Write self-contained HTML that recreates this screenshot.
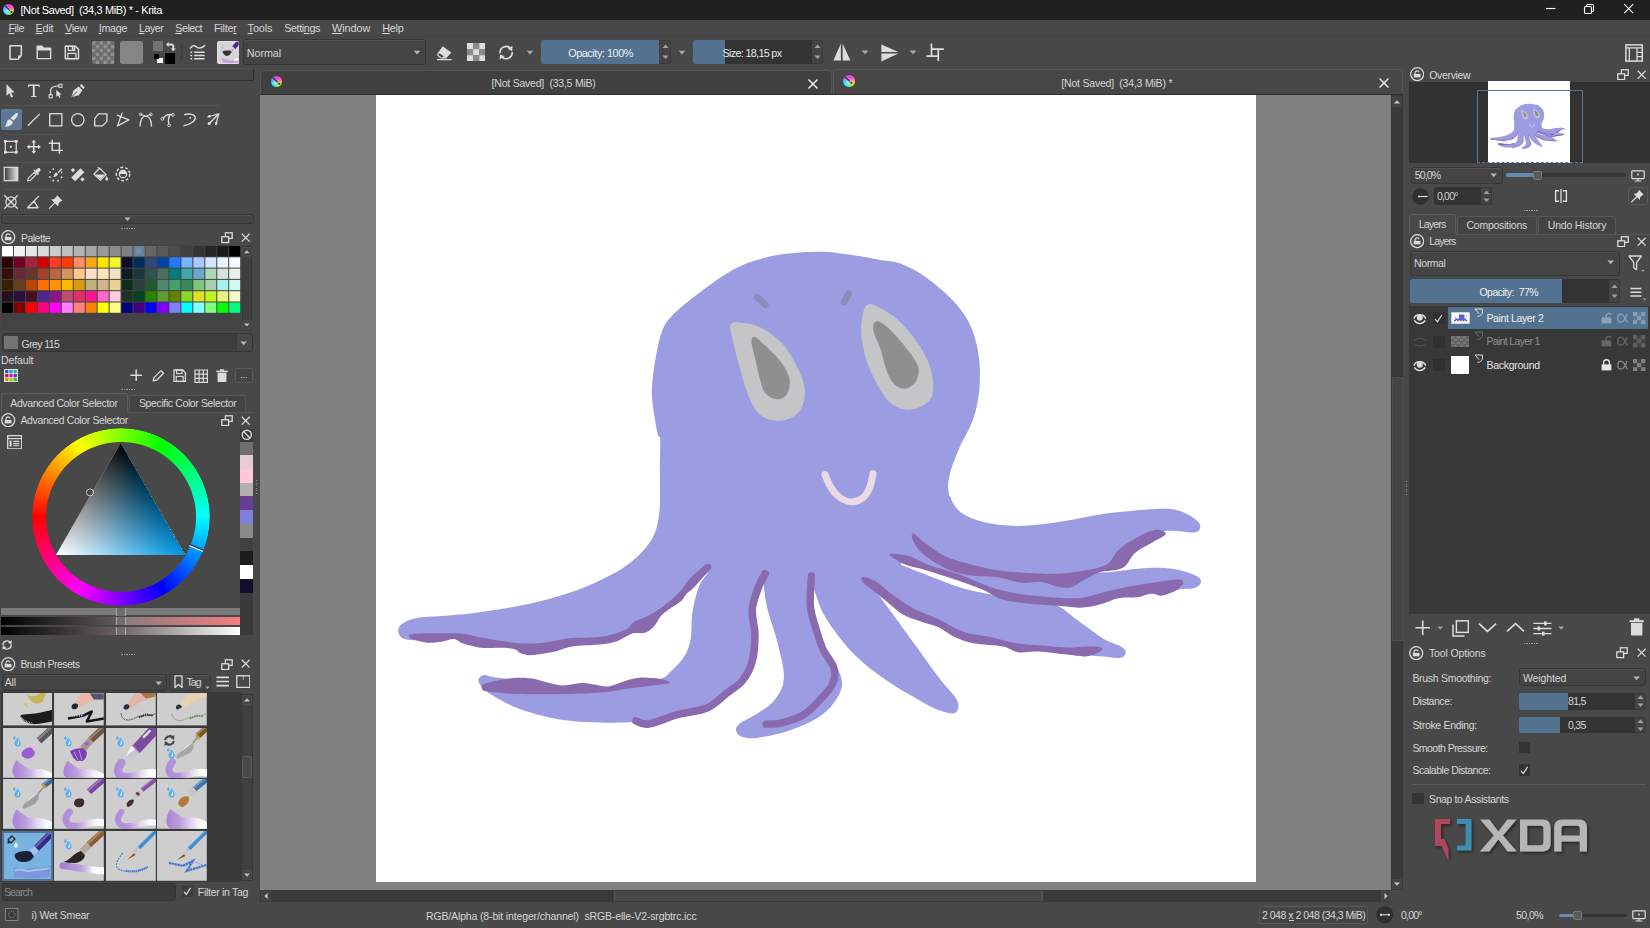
<!DOCTYPE html>
<html><head><meta charset="utf-8"><title>Krita</title>
<style>
html,body{margin:0;padding:0;}
body{width:1650px;height:928px;overflow:hidden;background:#484848;position:relative;
font-family:"Liberation Sans",sans-serif;}
#r{position:absolute;left:0;top:0;width:1650px;height:928px;overflow:hidden;}
#r div,#r span,#r svg{position:absolute;box-sizing:border-box;}
#r span{display:block;}
u{text-decoration:underline;text-underline-offset:1px;text-decoration-thickness:1px;}
</style></head><body><div id="r">

<div style="left:0.00px;top:0.00px;width:1650.00px;height:19.70px;background:#20211f;"></div>
<div style="left:2.60px;top:3.70px;width:11.80px;height:11.80px;border-radius:50%;background:radial-gradient(circle at 42% 58%,rgba(200,235,255,0.9) 0%,rgba(160,225,255,0.55) 22%,rgba(255,255,255,0) 48%),conic-gradient(from 0deg,#ff30f0 0deg,#ff48d8 40deg,#ff7a90 75deg,#ffe830 115deg,#9cf040 160deg,#20f0e0 200deg,#20e0ff 240deg,#6a90ff 285deg,#c060ff 320deg,#ff30f0 360deg);"></div>
<svg style="left:2.60px;top:3.70px;" width="11.80" height="11.80" viewBox="0 0 20 20"><path d="M3.6 3.4L11.4 10.6" stroke="#3a3a3a" stroke-width="2.5" stroke-linecap="round"/><path d="M11 10.2L13.4 12.4" stroke="#d8d8e8" stroke-width="1.6"/><circle cx="14.4" cy="13.4" r="1.9" fill="#2a2c3a"/></svg>
<span style="left:20.40px;top:4.59px;font-size:11px;line-height:11px;color:#ffffff;letter-spacing:-0.377px;white-space:pre;">[Not Saved]  (34,3 MiB) * - Krita</span>
<svg style="left:1545.00px;top:3.40px;" width="12.00" height="12.00" viewBox="0 0 12 12"><path d="M1 5.5H10.5" stroke="#fff" stroke-width="1.1"/></svg>
<svg style="left:1582.50px;top:3.00px;" width="12.00" height="12.00" viewBox="0 0 12 12"><rect x="1.5" y="3.5" width="7" height="7" rx="1.3" fill="none" stroke="#fff" stroke-width="1.1"/><path d="M3.5 3.3V2.6C3.5 2 4 1.5 4.6 1.5H9.4C10 1.5 10.5 2 10.5 2.6V7.4C10.5 8 10 8.5 9.4 8.5H8.8" fill="none" stroke="#fff" stroke-width="1.1"/></svg>
<svg style="left:1623.00px;top:3.00px;" width="12.00" height="12.00" viewBox="0 0 12 12"><path d="M1.2 1.2L10.2 10.2M10.2 1.2L1.2 10.2" stroke="#fff" stroke-width="1.1"/></svg>
<span style="left:8.40px;top:22.76px;font-size:10.8px;line-height:10.8px;color:#d6d6d6;letter-spacing:-0.401px;white-space:pre;"><u>F</u>ile</span>
<span style="left:35.60px;top:22.76px;font-size:10.8px;line-height:10.8px;color:#d6d6d6;letter-spacing:-0.203px;white-space:pre;"><u>E</u>dit</span>
<span style="left:64.90px;top:22.76px;font-size:10.8px;line-height:10.8px;color:#d6d6d6;letter-spacing:-0.279px;white-space:pre;"><u>V</u>iew</span>
<span style="left:98.70px;top:22.76px;font-size:10.8px;line-height:10.8px;color:#d6d6d6;letter-spacing:-0.303px;white-space:pre;"><u>I</u>mage</span>
<span style="left:138.90px;top:22.76px;font-size:10.8px;line-height:10.8px;color:#d6d6d6;letter-spacing:-0.503px;white-space:pre;"><u>L</u>ayer</span>
<span style="left:175.30px;top:22.76px;font-size:10.8px;line-height:10.8px;color:#d6d6d6;letter-spacing:-0.553px;white-space:pre;"><u>S</u>elect</span>
<span style="left:214.00px;top:22.76px;font-size:10.8px;line-height:10.8px;color:#d6d6d6;letter-spacing:-0.233px;white-space:pre;">Filte<u>r</u></span>
<span style="left:247.60px;top:22.76px;font-size:10.8px;line-height:10.8px;color:#d6d6d6;letter-spacing:-0.103px;white-space:pre;"><u>T</u>ools</span>
<span style="left:284.20px;top:22.76px;font-size:10.8px;line-height:10.8px;color:#d6d6d6;letter-spacing:-0.403px;white-space:pre;">Setti<u>n</u>gs</span>
<span style="left:332.00px;top:22.76px;font-size:10.8px;line-height:10.8px;color:#d6d6d6;letter-spacing:-0.035px;white-space:pre;"><u>W</u>indow</span>
<span style="left:382.20px;top:22.76px;font-size:10.8px;line-height:10.8px;color:#d6d6d6;letter-spacing:-0.203px;white-space:pre;"><u>H</u>elp</span>
<div style="left:0.00px;top:36.00px;width:1650.00px;height:1.00px;background:#434343;"></div>
<div style="left:259.60px;top:95.00px;width:1131.60px;height:795.30px;background:#818181;"></div>
<div style="left:376.40px;top:95.40px;width:879.80px;height:787.00px;background:#ffffff;"></div>
<svg style="left:259.60px;top:95.00px;" width="1131.60" height="795.30" viewBox="259.6 95 1131.6 795.3"><g fill="#9c9ce3"><path d="M659.5 470.0C659.2 458.4 660.6 446.6 660.2 440.5C659.8 434.4 658.5 439.7 657.2 433.7C655.9 427.7 653.2 412.7 652.3 404.6C651.4 396.5 651.2 393.3 651.7 385.2C652.2 377.1 653.9 365.3 655.6 356.1C657.3 346.9 659.3 336.9 662.0 330.2C664.7 323.5 666.3 321.3 671.7 315.7C677.1 310.1 685.8 303.0 694.4 296.3C703.0 289.6 714.4 281.0 723.5 275.3C732.6 269.6 739.6 265.8 749.3 262.3C759.0 258.8 769.8 256.1 781.7 254.3C793.6 252.5 809.7 251.7 820.5 251.7C831.3 251.7 836.7 253.0 846.4 254.3C856.1 255.6 869.6 258.1 878.7 259.7C887.9 261.3 893.2 260.9 901.3 264.0C909.4 267.1 918.6 272.3 927.2 278.5C935.8 284.7 946.0 293.6 953.0 301.1C960.0 308.7 965.2 315.7 969.2 323.8C973.2 331.9 975.6 341.0 977.3 349.6C979.0 358.2 979.6 366.9 979.6 375.5C979.6 384.1 978.8 393.3 977.3 401.4C975.8 409.5 973.9 416.4 970.9 424.0C967.9 431.6 963.0 438.6 959.5 446.7C956.0 454.8 951.8 465.0 949.8 472.5C947.8 480.0 947.2 486.8 947.2 491.9C947.2 497.0 952.9 495.0 950.0 503.0C947.1 511.0 941.7 530.5 930.0 540.0C918.3 549.5 901.7 555.8 880.0 560.0C858.3 564.2 826.7 565.0 800.0 565.0C773.3 565.0 740.0 564.2 720.0 560.0C700.0 555.8 689.7 548.3 680.0 540.0C670.3 531.7 665.4 521.7 662.0 510.0C658.6 498.3 659.8 481.6 659.5 470.0Z"/><path d="M660.0 438.0L660.0 530.0L705.0 562.0L711.0 570.5L764.0 573.0L767.0 573.8L811.0 575.2L815.0 576.6L870.0 592.0L905.0 560.0L950.0 510.0L947.0 480.0L800.0 400.0Z"/><path d="M700.0 520.0C688.0 505.0 674.6 474.0 668.0 470.0C661.4 466.0 661.9 488.9 660.4 496.0C658.9 503.1 659.9 506.3 659.0 512.3C658.1 518.2 657.2 525.8 654.9 531.7C652.6 537.6 650.1 542.2 645.2 547.9C640.4 553.6 633.3 560.3 625.8 565.7C618.2 571.1 609.6 575.6 599.9 580.2C590.2 584.8 580.0 589.2 567.6 593.2C555.2 597.2 540.6 601.3 525.5 604.5C510.4 607.7 490.5 610.7 477.0 612.6C463.5 614.5 454.4 615.0 444.7 615.8C435.0 616.6 425.5 616.5 418.8 617.6C412.1 618.7 407.8 620.4 404.3 622.3C400.8 624.2 398.6 626.4 398.0 628.9C397.4 631.4 398.4 635.1 400.5 637.0C402.6 638.9 405.5 639.5 410.7 640.1C415.9 640.7 423.9 640.8 431.7 640.5C439.5 640.2 448.4 637.7 457.6 638.5C466.8 639.3 477.0 643.9 486.7 645.5C496.4 647.1 508.2 646.9 515.8 648.0C523.3 649.1 523.4 652.8 532.0 652.0C540.6 651.2 555.2 645.0 567.6 643.0C580.0 641.0 595.5 642.2 606.3 640.0C617.1 637.8 624.1 634.0 632.2 630.0C640.3 626.0 648.6 620.2 654.9 616.0C661.2 611.8 665.1 608.7 670.0 604.5C674.9 600.3 679.5 595.4 684.0 591.0C688.5 586.6 693.0 581.9 697.0 578.0C701.0 574.1 701.0 570.5 708.2 567.5C715.4 564.5 741.4 567.9 740.0 560.0C738.6 552.1 712.0 535.0 700.0 520.0Z"/><path d="M700.0 570.0C691.4 571.8 708.5 568.2 708.2 571.0C708.0 573.8 701.2 579.8 698.5 586.7C695.8 593.6 693.4 604.0 692.0 612.6C690.6 621.2 691.7 631.1 690.4 638.4C689.1 645.7 687.2 650.8 684.0 656.2C680.8 661.6 674.8 667.1 671.0 670.8C667.2 674.5 666.7 676.8 661.3 678.5C655.9 680.2 646.8 679.6 638.7 681.0C630.6 682.4 621.4 686.3 612.8 687.0C604.2 687.7 595.1 685.3 587.0 685.3C578.9 685.3 573.5 687.7 564.3 687.0C555.1 686.3 541.2 682.3 532.0 681.0C522.8 679.7 516.0 679.7 509.3 679.0C502.6 678.3 496.1 677.7 492.0 677.0C487.9 676.3 486.6 674.9 484.5 675.0C482.4 675.1 480.2 676.2 479.2 677.5C478.2 678.8 477.4 680.6 478.6 683.0C479.9 685.4 483.3 689.0 486.7 691.8C490.1 694.5 493.9 696.8 499.0 699.5C504.1 702.2 509.7 705.4 517.3 708.2C524.9 711.0 535.4 714.3 544.5 716.4C553.6 718.5 561.2 719.8 571.8 720.9C582.4 722.0 597.6 722.5 608.2 722.7C618.8 723.0 628.8 722.2 635.5 722.4C642.2 722.6 641.4 725.4 648.4 724.1C655.4 722.8 667.8 717.1 677.5 714.4C687.2 711.7 698.5 711.5 706.6 708.0C714.7 704.5 720.1 698.0 726.0 693.4C731.9 688.8 737.9 685.9 742.2 680.5C746.5 675.1 749.9 668.6 751.9 661.1C753.9 653.6 754.5 643.8 754.5 635.2C754.5 626.6 751.3 617.5 751.9 609.4C752.5 601.3 756.2 592.6 758.3 586.7C760.4 580.8 764.3 578.2 764.6 573.8C764.9 569.3 770.8 560.6 760.0 560.0C749.2 559.4 708.6 568.2 700.0 570.0Z"/><path d="M790.0 555.0C782.2 554.7 769.9 566.3 765.9 574.4C761.9 582.5 764.0 592.2 765.9 603.5C767.8 614.8 774.1 629.9 777.0 642.3C779.9 654.7 784.0 668.2 783.5 677.9C783.0 687.6 778.6 694.3 773.8 700.5C768.9 706.7 760.1 711.2 754.4 715.0C748.7 718.8 742.9 720.6 739.8 723.1C736.7 725.6 735.3 727.9 735.6 730.2C735.9 732.5 737.7 735.5 741.4 736.7C745.1 738.0 749.5 738.8 757.6 737.7C765.7 736.6 779.7 733.7 789.9 730.2C800.1 726.7 811.5 721.7 819.0 716.7C826.5 711.8 831.4 705.9 835.2 700.5C839.0 695.1 841.4 689.7 841.7 684.3C842.0 678.9 839.8 674.0 836.8 668.1C833.8 662.2 827.3 655.2 824.0 648.7C820.7 642.2 818.9 636.0 817.0 629.0C815.1 622.0 813.2 615.5 812.5 606.7C811.8 597.9 816.2 584.6 812.5 576.0C808.8 567.4 797.8 555.3 790.0 555.0Z"/><path d="M840.0 555.0C830.4 553.3 818.2 570.1 814.4 577.6C810.6 585.1 815.0 592.7 817.4 600.2C819.8 607.8 822.5 613.7 828.7 622.9C834.9 632.1 844.9 645.5 854.6 655.2C864.3 664.9 876.2 673.6 887.0 681.1C897.8 688.6 910.7 695.6 919.3 700.5C927.9 705.4 933.1 708.1 938.7 710.2C944.4 712.4 950.0 714.0 953.2 713.4C956.4 712.8 957.8 709.6 958.1 706.9C958.4 704.2 958.1 702.0 954.9 697.2C951.7 692.4 945.7 687.0 938.7 677.9C931.7 668.8 921.4 654.2 912.8 642.3C904.2 630.4 893.8 615.8 887.0 606.7C880.2 597.7 879.8 596.6 872.0 588.0C864.2 579.4 849.6 556.7 840.0 555.0Z"/><path d="M870.0 552.0C877.5 552.4 885.0 558.4 895.0 562.5C905.0 566.6 919.2 572.3 930.0 576.5C940.8 580.7 951.2 584.8 960.0 587.5C968.8 590.2 973.0 590.9 983.0 593.0C993.0 595.1 1008.2 598.1 1020.0 600.0C1031.8 601.9 1044.0 600.8 1054.0 604.5C1064.0 608.2 1071.8 616.6 1079.9 622.3C1088.0 627.9 1096.0 634.5 1102.5 638.4C1109.0 642.3 1114.9 643.4 1118.7 645.6C1122.5 647.8 1124.9 649.4 1125.2 651.4C1125.5 653.4 1124.6 657.0 1120.3 657.8C1116.0 658.6 1110.3 657.0 1099.3 656.2C1088.2 655.4 1068.0 654.4 1054.0 653.0C1040.0 651.6 1023.8 649.4 1015.2 648.1C1006.6 646.8 1009.8 646.4 1002.3 645.0C994.8 643.6 979.7 642.7 970.0 640.0C960.3 637.3 954.2 633.0 944.0 629.0C933.8 625.0 918.2 621.2 908.5 616.0C898.8 610.8 893.4 604.0 885.9 598.0C878.4 592.0 869.2 586.3 863.2 580.0C857.2 573.7 848.9 564.7 850.0 560.0C851.1 555.3 862.5 551.6 870.0 552.0Z"/><path d="M900.0 535.0C911.7 536.7 933.3 549.5 950.0 555.0C966.7 560.5 983.3 564.8 1000.0 568.0C1016.7 571.2 1032.4 573.3 1050.0 574.0C1067.6 574.7 1091.6 573.1 1105.8 572.2C1120.0 571.4 1125.2 569.6 1134.9 568.9C1144.6 568.2 1155.9 567.6 1164.0 568.0C1172.1 568.4 1177.8 569.7 1183.4 571.2C1189.1 572.7 1195.1 575.0 1197.9 577.0C1200.7 579.0 1201.0 581.6 1200.2 583.5C1199.4 585.4 1196.5 587.3 1193.1 588.3C1189.7 589.3 1184.8 588.5 1180.0 589.3C1175.2 590.1 1171.0 592.0 1164.0 593.0C1157.0 594.0 1146.6 594.0 1138.0 595.0C1129.4 596.0 1120.8 597.2 1112.2 599.0C1103.6 600.8 1096.1 605.2 1086.4 606.0C1076.7 606.8 1064.8 604.8 1054.0 604.0C1043.2 603.2 1031.4 602.8 1021.7 601.0C1012.0 599.2 1005.0 596.2 995.8 593.0C986.6 589.8 978.0 586.0 966.7 582.0C955.4 578.0 937.6 572.3 927.9 569.0C918.2 565.7 914.4 564.3 908.5 562.0C902.6 559.7 897.0 557.8 892.3 555.0C887.5 552.2 878.7 548.3 880.0 545.0C881.3 541.7 888.3 533.3 900.0 535.0Z"/><path d="M930.0 480.0C937.9 477.0 944.1 489.2 947.2 491.9C950.4 494.6 946.7 492.8 948.9 496.2C951.1 499.6 954.5 508.0 960.2 512.3C965.9 516.6 973.7 519.7 982.9 522.0C992.1 524.3 1003.4 525.8 1015.2 525.9C1027.0 526.0 1039.5 524.7 1054.0 522.7C1068.5 520.7 1087.4 516.2 1102.5 514.0C1117.6 511.8 1133.3 510.5 1144.6 509.7C1155.9 508.9 1163.4 508.4 1170.4 509.1C1177.4 509.8 1182.0 511.9 1186.6 514.0C1191.2 516.1 1195.8 519.6 1197.9 522.0C1200.1 524.4 1200.3 526.8 1199.5 528.5C1198.7 530.2 1199.0 532.0 1193.1 532.4C1187.2 532.8 1172.1 529.6 1164.0 531.1C1155.9 532.6 1151.1 537.0 1144.6 541.4C1138.1 545.8 1130.6 553.3 1125.2 557.6C1119.8 561.9 1118.7 564.4 1112.2 567.3C1105.7 570.2 1093.9 572.2 1086.4 575.0C1078.9 577.8 1074.6 583.2 1067.0 584.0C1059.4 584.8 1049.6 581.0 1041.0 580.0C1032.4 579.0 1024.9 579.2 1015.2 578.0C1005.5 576.8 992.6 574.7 982.9 573.0C973.2 571.3 965.1 570.7 957.0 568.0C948.9 565.3 940.9 561.0 934.4 557.0C927.9 553.0 921.7 547.7 918.2 544.0C914.7 540.3 916.4 540.7 913.4 535.0C910.4 529.3 897.2 519.2 900.0 510.0C902.8 500.8 922.1 483.0 930.0 480.0Z"/></g><g fill="#8a6aae"><path d="M410.0 634.5C412.9 633.9 420.6 633.5 426.4 633.3C432.1 633.1 438.8 633.2 444.5 633.3C450.2 633.3 454.8 632.9 460.9 633.6C467.0 634.3 473.3 636.2 480.9 637.6C488.5 639.0 497.9 640.8 506.4 641.8C514.9 642.8 523.9 643.8 531.8 643.6C539.7 643.5 547.5 641.8 553.6 640.9C559.7 640.0 562.1 638.8 568.2 638.2C574.3 637.7 583.3 638.1 590.0 637.6C596.7 637.1 602.1 636.9 608.2 635.5C614.3 634.1 622.2 631.4 626.4 629.1C630.6 626.8 630.0 624.1 633.6 621.8C637.2 619.5 643.4 618.1 648.2 615.5C653.1 612.9 658.5 609.4 662.7 606.4C666.9 603.4 670.6 600.0 673.6 597.3C676.6 594.6 678.2 593.2 680.9 590.0C683.6 586.8 686.8 581.5 690.0 578.0C693.2 574.5 697.2 571.4 700.0 569.0C702.8 566.6 705.2 564.0 707.0 563.8C708.8 563.5 711.8 565.1 711.0 567.5C710.2 569.9 705.2 574.4 702.0 578.0C698.8 581.6 694.6 586.4 692.0 589.0C689.4 591.6 688.2 591.6 686.4 593.6C684.5 595.6 683.6 598.5 680.9 600.9C678.2 603.3 673.3 605.8 670.0 608.2C666.7 610.6 663.6 612.5 660.9 615.5C658.2 618.5 656.3 623.5 653.6 626.4C650.9 629.3 648.1 631.5 644.5 632.7C640.9 633.9 636.3 632.2 631.8 633.6C627.3 635.0 622.8 639.1 617.3 640.9C611.8 642.7 606.7 643.6 599.1 644.5C591.5 645.4 579.4 645.2 571.8 646.4C564.2 647.6 560.3 650.3 553.6 651.8C546.9 653.2 537.2 654.8 531.8 655.1C526.3 655.4 523.9 654.6 520.9 653.6C517.9 652.6 517.2 650.1 513.6 649.1C510.0 648.1 504.6 648.0 499.1 647.8C493.7 647.6 487.0 648.5 480.9 647.8C474.8 647.1 467.2 645.0 462.7 643.6C458.1 642.2 457.2 639.4 453.6 639.1C450.0 638.8 445.4 641.2 440.9 641.8C436.4 642.4 431.2 643.2 426.4 642.7C421.5 642.2 414.7 640.1 411.8 639.1C408.9 638.1 409.4 637.7 409.1 636.9C408.8 636.1 407.1 635.1 410.0 634.5Z"/><path d="M482.7 684.5C485.6 683.1 493.3 681.1 499.1 680.0C504.9 678.9 511.8 678.0 517.3 677.8C522.8 677.5 526.6 677.7 531.8 678.5C536.9 679.3 543.1 681.5 548.2 682.7C553.4 683.9 557.2 685.4 562.7 685.5C568.2 685.6 575.8 683.3 580.9 683.1C586.0 682.9 589.0 684.0 593.6 684.5C598.2 685.0 603.1 687.0 608.2 686.4C613.4 685.8 619.0 682.4 624.5 680.9C630.0 679.4 635.1 678.0 640.9 677.6C646.7 677.2 654.7 678.2 659.1 678.7C663.5 679.2 665.9 680.1 667.3 680.9C668.7 681.7 671.1 682.7 667.3 683.6C663.5 684.5 651.6 685.5 644.5 686.4C637.4 687.3 630.5 688.2 624.5 689.1C618.5 690.0 615.5 691.0 608.2 691.8C600.9 692.5 590.0 693.2 580.9 693.6C571.8 694.0 564.2 694.1 553.6 694.2C543.0 694.3 526.4 694.2 517.3 694.0C508.2 693.8 504.6 693.2 499.1 692.7C493.6 692.2 487.4 691.6 484.5 690.9C481.6 690.1 481.8 689.3 481.5 688.2C481.2 687.1 479.8 685.9 482.7 684.5Z"/><path d="M863.2 577.0C865.7 577.2 871.3 578.9 876.2 581.9C881.0 584.8 886.4 590.5 892.3 594.8C898.3 599.1 904.2 603.7 911.7 607.7C919.3 611.8 929.0 615.0 937.6 619.0C946.2 623.1 954.9 629.0 963.5 632.0C972.1 634.9 980.7 634.9 989.3 636.8C998.0 638.7 1006.6 641.8 1015.2 643.3C1023.8 644.8 1032.5 644.9 1041.1 645.6C1049.7 646.3 1059.4 647.3 1067.0 647.5C1074.5 647.7 1081.0 646.6 1086.4 646.5C1091.7 646.4 1096.9 646.2 1099.3 646.9C1101.7 647.6 1103.1 649.2 1100.9 650.7C1098.7 652.3 1092.0 655.6 1086.4 656.2C1080.7 656.9 1074.5 655.4 1067.0 654.6C1059.4 653.8 1049.2 651.8 1041.1 651.4C1033.0 651.0 1024.9 653.2 1018.4 652.4C1012.0 651.5 1009.8 648.0 1002.3 646.5C994.7 645.0 981.3 644.9 973.2 643.3C965.1 641.7 959.7 639.5 953.8 636.8C947.8 634.1 943.5 629.8 937.6 627.1C931.7 624.4 924.1 622.8 918.2 620.7C912.3 618.5 907.4 617.4 902.0 614.2C896.6 611.0 891.3 605.6 885.9 601.3C880.5 596.9 873.7 591.7 869.7 588.3C865.7 584.9 862.7 582.8 861.6 580.9C860.5 579.0 860.8 576.8 863.2 577.0Z"/><path d="M890.7 553.7C893.4 553.5 902.3 554.2 908.5 556.0C914.7 557.8 919.8 561.8 927.9 564.7C936.0 567.7 946.8 570.1 957.0 573.8C967.2 577.4 979.6 583.5 989.3 586.7C999.0 589.9 1005.5 591.5 1015.2 593.2C1024.9 594.9 1036.8 596.2 1047.6 597.1C1058.3 597.9 1070.2 598.9 1079.9 598.0C1089.6 597.1 1097.1 593.6 1105.8 591.6C1114.4 589.6 1123.0 587.7 1131.6 586.1C1140.2 584.4 1149.7 582.9 1157.5 581.9C1165.3 580.8 1174.3 579.6 1178.5 579.6C1182.7 579.6 1182.2 580.9 1182.7 581.9C1183.3 582.8 1183.3 583.5 1181.7 585.1C1180.2 586.7 1177.2 589.8 1173.7 591.6C1170.2 593.3 1164.5 595.5 1160.7 595.8C1157.0 596.0 1154.8 593.0 1151.0 593.2C1147.3 593.4 1143.5 596.2 1138.1 597.1C1132.7 597.9 1125.2 596.8 1118.7 598.0C1112.2 599.3 1105.8 602.9 1099.3 604.5C1092.8 606.1 1086.4 607.5 1079.9 607.7C1073.4 608.0 1069.1 606.8 1060.5 606.1C1051.9 605.4 1037.8 604.6 1028.1 603.5C1018.4 602.4 1009.8 601.9 1002.3 599.6C994.7 597.4 990.4 593.2 982.9 589.9C975.3 586.7 966.7 583.6 957.0 580.2C947.3 576.9 933.3 572.5 924.7 569.9C916.0 567.3 910.7 566.8 905.3 564.7C899.9 562.7 894.8 559.4 892.3 557.6C889.9 555.8 888.0 554.0 890.7 553.7Z"/><path d="M913.4 533.4C915.5 534.2 919.6 539.3 924.7 543.1C929.8 546.8 937.1 552.6 944.1 556.0C951.1 559.4 958.1 561.1 966.7 563.4C975.3 565.7 985.6 568.3 995.8 569.9C1006.1 571.5 1018.4 572.5 1028.1 573.1C1037.8 573.8 1045.4 574.1 1054.0 573.8C1062.6 573.5 1071.3 572.7 1079.9 571.2C1088.5 569.7 1099.3 568.3 1105.8 564.7C1112.2 561.1 1113.3 554.2 1118.7 549.5C1124.1 544.8 1132.2 539.8 1138.1 536.6C1144.0 533.4 1149.9 530.9 1154.3 530.1C1158.6 529.3 1162.3 530.8 1164.0 531.7C1165.6 532.7 1166.1 533.7 1164.0 535.6C1161.8 537.5 1155.9 540.2 1151.0 543.1C1146.2 545.9 1139.2 549.0 1134.9 552.8C1130.5 556.5 1128.4 562.8 1125.2 565.7C1121.9 568.5 1119.8 568.8 1115.5 569.9C1111.1 571.0 1104.7 570.4 1099.3 572.2C1093.9 573.9 1088.0 577.7 1083.1 580.2C1078.3 582.8 1074.5 586.3 1070.2 587.4C1065.9 588.4 1062.1 587.6 1057.3 586.7C1052.4 585.8 1047.0 582.5 1041.1 581.9C1035.2 581.2 1029.2 583.6 1021.7 582.8C1014.1 582.0 1004.4 578.2 995.8 577.0C987.2 575.8 977.5 576.5 969.9 575.4C962.4 574.3 957.0 573.1 950.5 570.5C944.1 568.0 936.5 563.7 931.1 560.2C925.8 556.7 921.4 553.2 918.2 549.5C915.0 545.9 912.5 540.9 911.7 538.2C910.9 535.5 911.2 532.5 913.4 533.4Z"/></g><g fill="none" stroke="#8a6aae" stroke-linecap="round" stroke-linejoin="round"><path d="M635.5 720.9C637.6 721.4 641.4 725.2 648.4 724.1C655.4 723.0 667.8 717.1 677.5 714.4C687.2 711.7 698.5 711.5 706.6 708.0C714.7 704.5 720.1 698.0 726.0 693.4C731.9 688.8 737.9 685.9 742.2 680.5C746.5 675.1 749.9 668.6 751.9 661.1C753.9 653.6 754.5 643.8 754.5 635.2C754.5 626.6 751.3 617.5 751.9 609.4C752.5 601.3 756.1 592.6 758.3 586.7C760.4 580.8 763.7 575.9 764.8 573.8" stroke-width="7.6"/><path d="M811.0 576.0C810.8 581.1 809.2 597.8 810.0 606.7C810.8 615.6 813.8 622.3 815.8 629.3C817.8 636.3 819.3 642.2 822.3 648.7C825.3 655.2 832.0 662.2 833.6 668.1C835.2 674.0 834.4 678.9 832.0 684.3C829.6 689.7 823.9 695.4 819.0 700.5C814.1 705.6 809.4 711.2 802.9 715.0C796.4 718.8 786.4 721.6 780.2 723.1C774.0 724.6 768.1 723.9 765.7 724.1" stroke-width="7.4"/></g><path d="M730.0 325.4C730.8 323.0 731.6 321.9 736.4 322.2C741.2 322.5 751.5 323.5 759.0 327.0C766.5 330.5 775.5 336.7 781.7 343.2C787.9 349.7 792.4 358.3 796.2 365.8C800.0 373.3 803.4 381.7 804.3 388.4C805.2 395.1 803.9 401.3 801.7 406.2C799.6 411.1 795.8 415.2 791.4 417.6C787.0 420.0 780.6 421.4 775.2 420.8C769.8 420.2 763.6 418.6 759.0 414.3C754.4 410.0 751.2 403.5 747.7 394.9C744.2 386.3 740.7 372.3 738.0 362.6C735.3 352.9 732.9 342.9 731.6 336.7C730.3 330.5 729.2 327.8 730.0 325.4Z" fill="#c5c5c7"/><path d="M754.2 336.7C756.1 337.0 758.3 339.4 762.3 343.2C766.3 347.0 774.1 353.9 778.4 359.3C782.7 364.7 786.4 370.6 788.1 375.5C789.8 380.4 789.6 384.7 788.8 388.4C788.0 392.1 785.8 395.8 783.3 397.5C780.8 399.2 776.8 399.8 773.6 398.8C770.4 397.8 766.3 395.3 763.9 391.7C761.5 388.1 760.6 383.0 759.0 377.1C757.4 371.2 755.5 362.0 754.2 356.1C752.9 350.2 751.0 344.8 751.0 341.6C751.0 338.4 752.3 336.4 754.2 336.7Z" fill="#8f8f8f"/><path d="M867.4 304.4C870.1 303.3 873.6 304.9 878.7 307.6C883.8 310.3 891.6 314.6 898.1 320.5C904.6 326.4 912.1 335.1 917.5 343.2C922.9 351.3 928.0 360.4 930.4 369.0C932.8 377.6 933.6 388.7 932.0 394.9C930.4 401.1 925.3 403.8 920.7 406.2C916.1 408.6 910.0 410.3 904.6 409.5C899.2 408.7 893.2 406.0 888.4 401.4C883.5 396.8 879.3 389.0 875.5 382.0C871.7 375.0 868.2 367.4 865.8 359.3C863.4 351.2 861.4 341.0 860.9 333.5C860.4 326.0 861.4 319.0 862.5 314.1C863.6 309.2 864.7 305.5 867.4 304.4Z" fill="#c5c5c7"/><path d="M877.1 321.2C879.4 321.5 882.2 322.8 886.8 327.0C891.4 331.2 899.5 339.9 904.6 346.4C909.7 352.9 915.6 360.1 917.5 365.8C919.4 371.5 917.8 376.6 915.9 380.4C914.0 384.2 909.7 387.6 906.2 388.4C902.7 389.2 898.1 387.9 894.9 385.2C891.7 382.5 889.2 378.2 886.8 372.3C884.4 366.4 882.5 356.1 880.3 349.6C878.1 343.1 875.0 337.5 873.8 333.5C872.6 329.5 872.3 327.4 872.9 325.4C873.5 323.3 874.8 320.9 877.1 321.2Z" fill="#8f8f8f"/><g fill="none" stroke-linecap="round"><path d="M756.8 297.2L765 304.6" stroke="#8c8cba" stroke-width="6.6"/><path d="M848.3 293.6L843.6 302.3" stroke="#8c8cba" stroke-width="6.6"/><path d="M824.6 474.5C828 484 832 491 837 495.5C843 501 851 503.5 858 500.5C866 497 870 490 872.6 473.6" stroke="#ecd9e6" stroke-width="7"/></g></svg>
<div style="left:259.80px;top:69.80px;width:572.00px;height:24.40px;background:#404040;border:1px solid #535353;border-bottom:none;border-radius:4px 4px 0 0;"></div>
<div style="left:833.30px;top:68.60px;width:569.40px;height:25.80px;background:#474747;border:1px solid #555555;border-bottom:none;border-radius:4px 4px 0 0;"></div>
<div style="left:259.60px;top:94.00px;width:1143.40px;height:1.20px;background:#2e2e2e;"></div>
<div style="left:270.90px;top:75.70px;width:11.60px;height:11.60px;border-radius:50%;background:radial-gradient(circle at 42% 58%,rgba(200,235,255,0.9) 0%,rgba(160,225,255,0.55) 22%,rgba(255,255,255,0) 48%),conic-gradient(from 0deg,#ff30f0 0deg,#ff48d8 40deg,#ff7a90 75deg,#ffe830 115deg,#9cf040 160deg,#20f0e0 200deg,#20e0ff 240deg,#6a90ff 285deg,#c060ff 320deg,#ff30f0 360deg);"></div>
<svg style="left:270.90px;top:75.70px;" width="11.60" height="11.60" viewBox="0 0 20 20"><path d="M3.6 3.4L11.4 10.6" stroke="#3a3a3a" stroke-width="2.5" stroke-linecap="round"/><path d="M11 10.2L13.4 12.4" stroke="#d8d8e8" stroke-width="1.6"/><circle cx="14.4" cy="13.4" r="1.9" fill="#2a2c3a"/></svg>
<div style="left:843.00px;top:75.40px;width:11.60px;height:11.60px;border-radius:50%;background:radial-gradient(circle at 42% 58%,rgba(200,235,255,0.9) 0%,rgba(160,225,255,0.55) 22%,rgba(255,255,255,0) 48%),conic-gradient(from 0deg,#ff30f0 0deg,#ff48d8 40deg,#ff7a90 75deg,#ffe830 115deg,#9cf040 160deg,#20f0e0 200deg,#20e0ff 240deg,#6a90ff 285deg,#c060ff 320deg,#ff30f0 360deg);"></div>
<svg style="left:843.00px;top:75.40px;" width="11.60" height="11.60" viewBox="0 0 20 20"><path d="M3.6 3.4L11.4 10.6" stroke="#3a3a3a" stroke-width="2.5" stroke-linecap="round"/><path d="M11 10.2L13.4 12.4" stroke="#d8d8e8" stroke-width="1.6"/><circle cx="14.4" cy="13.4" r="1.9" fill="#2a2c3a"/></svg>
<span style="left:491.60px;top:78.01px;font-size:10.5px;line-height:10.5px;color:#d6d6d6;letter-spacing:-0.223px;white-space:pre;">[Not Saved]  (33,5 MiB)</span>
<span style="left:1061.30px;top:78.01px;font-size:10.5px;line-height:10.5px;color:#d6d6d6;letter-spacing:-0.205px;white-space:pre;">[Not Saved]  (34,3 MiB) *</span>
<svg style="left:806.50px;top:77.60px;" width="12.00" height="12.00" viewBox="0 0 12 12"><path d="M1.5 1.5L10.5 10.5M10.5 1.5L1.5 10.5" stroke="#f0f0f0" stroke-width="1.5"/></svg>
<svg style="left:1377.80px;top:77.30px;" width="12.00" height="12.00" viewBox="0 0 12 12"><path d="M1.5 1.5L10.5 10.5M10.5 1.5L1.5 10.5" stroke="#f0f0f0" stroke-width="1.5"/></svg>
<div style="left:1391.20px;top:95.00px;width:11.80px;height:795.30px;background:#3a3a3a;"></div>
<div style="left:1391.80px;top:377.00px;width:11.00px;height:264.00px;background:#444444;border:1px solid #4e4e4e;"></div>
<svg style="left:1392.20px;top:96.50px;" width="10.00" height="10.00" viewBox="0 0 10 10"><rect x="0" y="0" width="10" height="10" rx="1" fill="#434343" stroke="#555" stroke-width="0.6"/><path d="M2 6.5L5 3.3L8 6.5Z" fill="#c8c8c8"/></svg>
<svg style="left:1392.20px;top:879.40px;" width="10.00" height="10.00" viewBox="0 0 10 10"><rect x="0" y="0" width="10" height="10" rx="1" fill="#434343" stroke="#555" stroke-width="0.6"/><path d="M2 3.5L5 6.7L8 3.5Z" fill="#c8c8c8"/></svg>
<div style="left:259.60px;top:890.30px;width:1131.60px;height:11.80px;background:#3a3a3a;"></div>
<div style="left:614.00px;top:891.00px;width:428.60px;height:10.40px;background:#484848;border-left:1px solid #555;border-right:1px solid #555;"></div>
<svg style="left:261.00px;top:891.20px;" width="10.00" height="10.00" viewBox="0 0 10 10"><rect x="0" y="0" width="10" height="10" rx="1" fill="#434343" stroke="#555" stroke-width="0.6"/><path d="M6.5 2L3.3 5L6.5 8Z" fill="#c8c8c8"/></svg>
<svg style="left:1380.60px;top:891.20px;" width="10.00" height="10.00" viewBox="0 0 10 10"><rect x="0" y="0" width="10" height="10" rx="1" fill="#434343" stroke="#555" stroke-width="0.6"/><path d="M3.5 2L6.7 5L3.5 8Z" fill="#c8c8c8"/></svg>
<span style="left:31.50px;top:910.31px;font-size:10.5px;line-height:10.5px;color:#d6d6d6;letter-spacing:-0.272px;white-space:pre;">i) Wet Smear</span>
<svg style="left:5.40px;top:908.30px;" width="13.50" height="13.00" viewBox="0 0 13.5 13"><rect x="0.5" y="0.5" width="12.5" height="12" fill="#3c3c3c" stroke="#8a8a8a" stroke-width="0.9"/><circle cx="6.75" cy="6.5" r="3.2" fill="none" stroke="#a0a0a0" stroke-width="0.8" stroke-dasharray="1 1"/></svg>
<span style="left:426.00px;top:910.71px;font-size:10.5px;line-height:10.5px;color:#d6d6d6;letter-spacing:-0.143px;white-space:pre;">RGB/Alpha (8-bit integer/channel)  sRGB-elle-V2-srgbtrc.icc</span>
<div style="left:1258.90px;top:906.20px;width:109.50px;height:17.70px;background:#454545;border:1px solid #5a5a5a;border-radius:2px;"></div>
<span style="left:1262.00px;top:910.31px;font-size:10.5px;line-height:10.5px;color:#d6d6d6;letter-spacing:-0.491px;white-space:pre;">2 048 x 2 048 (34,3 MiB)</span>
<div style="left:1288.50px;top:920.20px;width:5.00px;height:0.90px;background:#d0d0d0;"></div>
<svg style="left:1376.30px;top:906.20px;" width="17.60" height="17.60" viewBox="0 0 17.6 17.6"><circle cx="8.8" cy="8.8" r="8.6" fill="#303030"/><path d="M5 8.8H14" stroke="#e8e8e8" stroke-width="1"/><circle cx="5" cy="8.8" r="1.1" fill="#e8e8e8"/><path d="M12.4 7.2L14.4 8.8L12.4 10.4Z" fill="#e8e8e8"/></svg>
<span style="left:1401.00px;top:910.31px;font-size:10.5px;line-height:10.5px;color:#d6d6d6;letter-spacing:-0.807px;white-space:pre;">0,00°</span>
<span style="left:1516.00px;top:910.31px;font-size:10.5px;line-height:10.5px;color:#d6d6d6;letter-spacing:-0.554px;white-space:pre;">50,0%</span>
<div style="left:1558.50px;top:913.80px;width:68.00px;height:3.20px;background:#363636;border-radius:1.6px;"></div>
<div style="left:1558.50px;top:913.80px;width:16.00px;height:3.20px;background:#658ab6;border-radius:1.6px;"></div>
<div style="left:1573.30px;top:910.60px;width:9.00px;height:9.40px;background:#5a5a5a;border:1px solid #777;border-radius:2px;"></div>
<svg style="left:1632.20px;top:909.60px;" width="14.00" height="12.00" viewBox="0 0 14 12"><rect x="0.8" y="0.8" width="12.4" height="7.8" rx="0.8" fill="none" stroke="#dcdcdc" stroke-width="1.2"/><rect x="6.2" y="3.6" width="1.6" height="1.8" fill="#dcdcdc"/><path d="M7 8.6V10.6M3.6 11H10.4" stroke="#dcdcdc" stroke-width="1.1"/></svg>
<svg style="left:8.00px;top:44.00px;" width="16.00" height="17.00" viewBox="0 0 16 17"><path d="M2 1.7H13.3V11.5L10 15.3H2Z" fill="none" stroke="#dcdcdc" stroke-width="1.5" stroke-linejoin="round"/><path d="M13.3 11.5H10V15.3Z" fill="#dcdcdc"/></svg>
<svg style="left:36.00px;top:45.00px;" width="16.00" height="15.00" viewBox="0 0 16 15"><path d="M1.2 13.6V1.2H6L7.6 3.2H14.6V13.6Z" fill="none" stroke="#dcdcdc" stroke-width="1.4" stroke-linejoin="round"/><path d="M1.2 1.2H6L7.6 3.2H14.6V5.4H1.2Z" fill="#dcdcdc"/></svg>
<svg style="left:64.30px;top:44.80px;" width="16.00" height="15.00" viewBox="0 0 16 15"><path d="M1.3 1.3H11.5L14.5 4.3V13.7H1.3Z" fill="none" stroke="#dcdcdc" stroke-width="1.4" stroke-linejoin="round"/><rect x="4.3" y="1.3" width="6.4" height="4.2" fill="none" stroke="#dcdcdc" stroke-width="1.2"/><rect x="7.8" y="2" width="1.8" height="2.8" fill="#dcdcdc"/><rect x="3.8" y="8.4" width="8.2" height="5.3" fill="none" stroke="#dcdcdc" stroke-width="1.2"/></svg>
<svg style="left:92.00px;top:41.00px;" width="22.60" height="23.10" viewBox="0 0 22.6 23.1"><defs><clipPath id="cp1"><rect x="0" y="0" width="22.6" height="23.1" rx="2.5"/></clipPath></defs><g clip-path="url(#cp1)"><rect x="0.00" y="0.00" width="3.8" height="3.9" fill="#909090"/><rect x="0.00" y="3.85" width="3.8" height="3.9" fill="#6e6e6e"/><rect x="0.00" y="7.70" width="3.8" height="3.9" fill="#909090"/><rect x="0.00" y="11.55" width="3.8" height="3.9" fill="#6e6e6e"/><rect x="0.00" y="15.40" width="3.8" height="3.9" fill="#909090"/><rect x="0.00" y="19.25" width="3.8" height="3.9" fill="#6e6e6e"/><rect x="3.75" y="0.00" width="3.8" height="3.9" fill="#6e6e6e"/><rect x="3.75" y="3.85" width="3.8" height="3.9" fill="#909090"/><rect x="3.75" y="7.70" width="3.8" height="3.9" fill="#6e6e6e"/><rect x="3.75" y="11.55" width="3.8" height="3.9" fill="#909090"/><rect x="3.75" y="15.40" width="3.8" height="3.9" fill="#6e6e6e"/><rect x="3.75" y="19.25" width="3.8" height="3.9" fill="#909090"/><rect x="7.50" y="0.00" width="3.8" height="3.9" fill="#909090"/><rect x="7.50" y="3.85" width="3.8" height="3.9" fill="#6e6e6e"/><rect x="7.50" y="7.70" width="3.8" height="3.9" fill="#909090"/><rect x="7.50" y="11.55" width="3.8" height="3.9" fill="#6e6e6e"/><rect x="7.50" y="15.40" width="3.8" height="3.9" fill="#909090"/><rect x="7.50" y="19.25" width="3.8" height="3.9" fill="#6e6e6e"/><rect x="11.25" y="0.00" width="3.8" height="3.9" fill="#6e6e6e"/><rect x="11.25" y="3.85" width="3.8" height="3.9" fill="#909090"/><rect x="11.25" y="7.70" width="3.8" height="3.9" fill="#6e6e6e"/><rect x="11.25" y="11.55" width="3.8" height="3.9" fill="#909090"/><rect x="11.25" y="15.40" width="3.8" height="3.9" fill="#6e6e6e"/><rect x="11.25" y="19.25" width="3.8" height="3.9" fill="#909090"/><rect x="15.00" y="0.00" width="3.8" height="3.9" fill="#909090"/><rect x="15.00" y="3.85" width="3.8" height="3.9" fill="#6e6e6e"/><rect x="15.00" y="7.70" width="3.8" height="3.9" fill="#909090"/><rect x="15.00" y="11.55" width="3.8" height="3.9" fill="#6e6e6e"/><rect x="15.00" y="15.40" width="3.8" height="3.9" fill="#909090"/><rect x="15.00" y="19.25" width="3.8" height="3.9" fill="#6e6e6e"/><rect x="18.75" y="0.00" width="3.8" height="3.9" fill="#6e6e6e"/><rect x="18.75" y="3.85" width="3.8" height="3.9" fill="#909090"/><rect x="18.75" y="7.70" width="3.8" height="3.9" fill="#6e6e6e"/><rect x="18.75" y="11.55" width="3.8" height="3.9" fill="#909090"/><rect x="18.75" y="15.40" width="3.8" height="3.9" fill="#6e6e6e"/><rect x="18.75" y="19.25" width="3.8" height="3.9" fill="#909090"/></g></svg>
<div style="left:120.00px;top:41.00px;width:22.60px;height:23.10px;background:#858585;border-radius:2.5px;"></div>
<div style="left:152.70px;top:41.20px;width:10.00px;height:9.70px;background:#737373;"></div>
<div style="left:165.00px;top:53.30px;width:10.40px;height:10.30px;background:#000000;"></div>
<div style="left:153.50px;top:53.80px;width:5.40px;height:5.40px;background:#000000;z-index:2;"></div>
<div style="left:157.20px;top:57.60px;width:5.40px;height:5.60px;background:#ffffff;"></div>
<svg style="left:164.50px;top:41.00px;" width="11.50" height="11.00" viewBox="0 0 11.5 11"><path d="M1 3.4L3.6 0.8V2.5H7.8V4.4H3.6V6Z" fill="#dcdcdc"/><path d="M8.2 10.2L5.6 7.6H7.3V3.6H9.2V7.6H10.8Z" fill="#dcdcdc"/></svg>
<div style="left:181.40px;top:44.00px;width:1.00px;height:17.00px;background:#3c3c3c;"></div>
<svg style="left:188.60px;top:44.20px;" width="17.00" height="17.00" viewBox="0 0 17 17"><path d="M1.4 4.2C3.5 1 5.6 1.4 7.6 3C9.6 4.6 12.4 4.4 15.6 1.6" fill="none" stroke="#dcdcdc" stroke-width="1.5" stroke-linecap="round"/><path d="M5.2 8.2H15.6M5.2 11.5H15.6M5.2 14.8H15.6" stroke="#dcdcdc" stroke-width="1.5"/><path d="M1.4 8.2H3.2M1.4 11.5H3.2M1.4 14.8H3.2" stroke="#dcdcdc" stroke-width="1.5"/></svg>
<svg style="left:216.50px;top:40.90px;" width="22.60" height="23.00" viewBox="0 0 22.6 23"><defs><clipPath id="bpc"><rect x="0" y="0" width="22.6" height="23" rx="2.2"/></clipPath></defs><g clip-path="url(#bpc)"><rect x="0" y="0" width="22.6" height="23" fill="#d6d6d6"/><path d="M4.6 16.2C4.8 21 8.6 17.4 11.6 19.6C14.8 21.8 18.6 17.4 22.6 15V22.4H6.4C4.8 21 4.4 18.6 4.6 16.2Z" fill="#c4a6e2" opacity="0.85"/><path d="M5.4 17C6 20.6 9 18 11.8 20.2C15 22.4 19 18.6 22.6 16.6" fill="none" stroke="#a67fd0" stroke-width="0.7" opacity="0.8"/><ellipse cx="19.6" cy="18.4" rx="3" ry="1.3" fill="#ffffff" opacity="0.9" transform="rotate(-18 19.6 18.4)"/><path d="M16.6 6.8L22.4 0.4" stroke="#4b2a90" stroke-width="4.2"/><path d="M13.2 10.2L16.8 6.6" stroke="#d6d0e0" stroke-width="3.2"/><path d="M13.8 11L17.4 7.4" stroke="#a88cd0" stroke-width="1"/><path d="M13.4 9.6L14.6 11.2C13.4 13.4 11.6 14.8 9.2 14.9C7 13.8 5.6 12.2 5.6 10.6C6.4 9.4 9.6 9.4 13.4 9.6Z" fill="#383034"/><path d="M4.4 5.2C5.2 6.4 6.8 6 7.2 7.4A1.5 1.5 0 0 1 4.6 7.6C4.2 6.8 4.6 6 4.4 5.2Z" fill="#8ccff8"/><circle cx="6.8" cy="5.4" r="0.7" fill="#8ccff8"/><rect x="0.4" y="0.4" width="21.8" height="22.2" rx="2" fill="none" stroke="#e6e6e6" stroke-width="0.8"/></g></svg>
<div style="left:243.20px;top:39.00px;width:183.00px;height:25.60px;background:#444444;border:1px solid #363636;border-radius:3px;box-shadow:inset 0 1px 0 #525252;"></div>
<span style="left:246.80px;top:47.76px;font-size:10.8px;line-height:10.8px;color:#d6d6d6;letter-spacing:-0.101px;white-space:pre;">Normal</span>
<svg style="left:413.00px;top:50.40px;" width="8.00" height="5.00" viewBox="0 0 8 5"><path d="M0.6 0.8H7.4L4 4.4Z" fill="#b4b4b4"/></svg>
<svg style="left:435.00px;top:44.50px;" width="18.00" height="16.00" viewBox="0 0 18 16"><path d="M7.6 1.2L16.4 7.4L11.4 13H6L1.8 9.6Z" fill="#dcdcdc"/><path d="M2.4 9.2L7 12.8" stroke="#484848" stroke-width="1"/><path d="M3 10.4L6.6 13.4L8.6 11.2L4.6 8.2Z" fill="#484848"/><path d="M2 9.6L6 13H11.4" fill="none" stroke="#dcdcdc" stroke-width="1.1"/><path d="M2 14.6H16.6" stroke="#dcdcdc" stroke-width="1.3"/></svg>
<svg style="left:466.60px;top:43.00px;" width="18.40" height="18.40" viewBox="0 0 18.4 18.4"><rect x="0.00" y="0.00" width="6.2" height="6.2" fill="#dcdcdc"/><rect x="0.00" y="6.10" width="6.2" height="6.2" fill="#8a8a8a"/><rect x="0.00" y="12.20" width="6.2" height="6.2" fill="#dcdcdc"/><rect x="6.10" y="0.00" width="6.2" height="6.2" fill="#8a8a8a"/><rect x="6.10" y="6.10" width="6.2" height="6.2" fill="#dcdcdc"/><rect x="6.10" y="12.20" width="6.2" height="6.2" fill="#8a8a8a"/><rect x="12.20" y="0.00" width="6.2" height="6.2" fill="#dcdcdc"/><rect x="12.20" y="6.10" width="6.2" height="6.2" fill="#8a8a8a"/><rect x="12.20" y="12.20" width="6.2" height="6.2" fill="#dcdcdc"/></svg>
<svg style="left:497.00px;top:43.60px;" width="18.00" height="17.00" viewBox="0 0 18 17"><path d="M3 9.2A6.2 6.2 0 0 1 13.8 4.6" fill="none" stroke="#dcdcdc" stroke-width="1.6"/><path d="M15.6 1.8L15.2 7L10.6 5Z" fill="#dcdcdc"/><path d="M15.2 8A6.2 6.2 0 0 1 4.4 12.6" fill="none" stroke="#dcdcdc" stroke-width="1.6"/><path d="M2.6 15.4L3 10.2L7.6 12.2Z" fill="#dcdcdc"/></svg>
<svg style="left:526.00px;top:50.40px;" width="8.00" height="5.00" viewBox="0 0 8 5"><path d="M0.6 0.8H7.4L4 4.4Z" fill="#a8a8a8"/></svg>
<div style="left:540.70px;top:39.60px;width:118.60px;height:24.40px;background:#527290;border-radius:2px 0 0 2px;"></div>
<span style="left:568.20px;top:47.76px;font-size:10.8px;line-height:10.8px;color:#f0f0f0;letter-spacing:-0.418px;white-space:pre;">Opacity: 100%</span>
<div style="left:659.30px;top:39.60px;width:11.40px;height:24.40px;background:#444444;border:1px solid #383838;border-left:none;border-radius:0 3px 3px 0;"></div>
<svg style="left:661.50px;top:44.19px;" width="7.00" height="4.50" viewBox="0 0 7 4.5"><path d="M0.5 4L3.5 0.6L6.5 4Z" fill="#a0a0a0"/></svg>
<svg style="left:661.50px;top:55.01px;" width="7.00" height="4.50" viewBox="0 0 7 4.5"><path d="M0.5 0.5L3.5 3.9L6.5 0.5Z" fill="#a0a0a0"/></svg>
<svg style="left:678.00px;top:50.40px;" width="8.00" height="5.00" viewBox="0 0 8 5"><path d="M0.6 0.8H7.4L4 4.4Z" fill="#a8a8a8"/></svg>
<div style="left:692.80px;top:39.60px;width:119.40px;height:24.40px;background:#333333;border-radius:2px 0 0 2px;"></div>
<div style="left:692.80px;top:39.60px;width:32.00px;height:24.40px;background:#527290;border-radius:2px 0 0 2px;"></div>
<span style="left:722.60px;top:47.76px;font-size:10.8px;line-height:10.8px;color:#e6e6e6;letter-spacing:-0.689px;white-space:pre;">Size: 18,15 px</span>
<div style="left:812.20px;top:39.60px;width:10.60px;height:24.40px;background:#444444;border:1px solid #383838;border-left:none;border-radius:0 3px 3px 0;"></div>
<svg style="left:814.00px;top:44.19px;" width="7.00" height="4.50" viewBox="0 0 7 4.5"><path d="M0.5 4L3.5 0.6L6.5 4Z" fill="#a0a0a0"/></svg>
<svg style="left:814.00px;top:55.01px;" width="7.00" height="4.50" viewBox="0 0 7 4.5"><path d="M0.5 0.5L3.5 3.9L6.5 0.5Z" fill="#a0a0a0"/></svg>
<svg style="left:833.40px;top:43.40px;" width="18.00" height="18.00" viewBox="0 0 18 18"><path d="M7.9 0.4V17.6H0.4Z" fill="#dcdcdc"/><path d="M9.6 0.4V17.6H17.4Z" fill="#dcdcdc"/></svg>
<svg style="left:860.60px;top:50.20px;" width="8.00" height="5.00" viewBox="0 0 8 5"><path d="M0.6 0.6H7.4L4 4.2Z" fill="#a8a8a8"/></svg>
<svg style="left:881.20px;top:43.60px;" width="18.00" height="18.00" viewBox="0 0 18 18"><path d="M0.4 7.9H17.4L0.4 0.4Z" fill="#dcdcdc"/><path d="M0.4 9.6H17.4L0.4 17.4Z" fill="#dcdcdc"/></svg>
<svg style="left:908.60px;top:50.20px;" width="8.00" height="5.00" viewBox="0 0 8 5"><path d="M0.6 0.6H7.4L4 4.2Z" fill="#a8a8a8"/></svg>
<svg style="left:926.00px;top:43.00px;" width="18.40" height="18.40" viewBox="0 0 18.4 18.4"><path d="M5.5 0.6V13.1M5.5 6.1H17.8M0.4 13.1H12.7M12.3 6.1V18" fill="none" stroke="#dcdcdc" stroke-width="1.7"/></svg>
<svg style="left:1625.40px;top:43.50px;" width="18.20" height="18.00" viewBox="0 0 18.2 18"><rect x="0.9" y="0.9" width="16.4" height="16.2" fill="none" stroke="#dcdcdc" stroke-width="1.5"/><path d="M0.9 3.8H17.3M4.3 3.8V17.1M12 3.8V17.1M12 8.3H17.3M12 12.6H17.3" stroke="#dcdcdc" stroke-width="1.3"/></svg>
<div style="left:253.60px;top:68.00px;width:6.00px;height:837.00px;background:#484848;"></div>
<div style="left:256.20px;top:480.00px;width:1.30px;height:1.30px;background:#8a8a8a;"></div>
<div style="left:256.20px;top:482.50px;width:1.30px;height:1.30px;background:#8a8a8a;"></div>
<div style="left:256.20px;top:485.00px;width:1.30px;height:1.30px;background:#8a8a8a;"></div>
<div style="left:256.20px;top:487.50px;width:1.30px;height:1.30px;background:#8a8a8a;"></div>
<div style="left:256.20px;top:490.00px;width:1.30px;height:1.30px;background:#8a8a8a;"></div>
<div style="left:256.20px;top:492.50px;width:1.30px;height:1.30px;background:#8a8a8a;"></div>
<div style="left:0.00px;top:68.00px;width:254.40px;height:12.60px;background:#464646;border-top:1px solid #525252;border-bottom:1.4px solid #303030;border-right:1.4px solid #303030;"></div>
<div style="left:4.00px;top:104.80px;width:215.00px;height:1.00px;background:#525252;"></div>
<div style="left:4.00px;top:134.00px;width:58.00px;height:1.00px;background:#525252;"></div>
<div style="left:4.00px;top:161.50px;width:125.00px;height:1.00px;background:#525252;"></div>
<div style="left:4.00px;top:188.80px;width:58.00px;height:1.00px;background:#525252;"></div>
<svg style="left:3.10px;top:83.40px;" width="15.60" height="15.60" viewBox="0 0 20 20"><path d="M4.5 1.5V16.2L8 13L10.6 18.6L13 17.6L10.4 12.2H15Z" fill="#dcdcdc"/></svg>
<svg style="left:25.50px;top:83.40px;" width="15.60" height="15.60" viewBox="0 0 20 20"><path d="M2.6 2H17.4V5.4H16.2V3.8H11.2V16.6H13.4V18H6.6V16.6H8.8V3.8H3.8V5.4H2.6Z" fill="#dcdcdc"/></svg>
<svg style="left:47.90px;top:83.40px;" width="15.60" height="15.60" viewBox="0 0 20 20"><path d="M3.4 16V9C3.4 5.6 6 4 14.4 3.6" stroke="#dcdcdc" fill="none" stroke-width="1.6"/><rect x="14" y="1.6" width="4" height="4" stroke="#dcdcdc" fill="none" stroke-width="1.3"/><rect x="1.4" y="15" width="4" height="4" stroke="#dcdcdc" fill="none" stroke-width="1.3"/><path d="M10.6 8.6V18L13 15.8L14.6 19.2L16.2 18.4L14.6 15.2H17.6Z" fill="#dcdcdc"/></svg>
<svg style="left:70.30px;top:83.40px;" width="15.60" height="15.60" viewBox="0 0 20 20"><path d="M1.6 18.4L4.6 9.2L11.2 4.6L16 9.4L11.4 15.6Z" fill="#dcdcdc"/><path d="M1.8 18.2L9 11" stroke="#484848" stroke-width="1.2"/><path d="M12.6 3.4L14.6 1.4L19 5.8L17 7.8Z" fill="#dcdcdc"/></svg>
<div style="left:1.20px;top:109.20px;width:20.40px;height:20.80px;background:#5c7a98;border-radius:2.5px;"></div>
<svg style="left:2.90px;top:111.50px;" width="16.00" height="16.00" viewBox="0 0 20 20"><path d="M18.2 1.4C19.4 2.4 18.6 4.4 17.2 6.2L13 11L9.6 7.8L14.2 3C15.6 1.6 17.2 0.6 18.2 1.4Z" fill="#e4e4e4"/><path d="M8.6 9L12 12.2C12.4 15.4 9.4 18 2 18.6C4.4 16.6 4 14.4 5 12C5.8 10 7.2 9 8.6 9Z" fill="#e4e4e4"/></svg>
<svg style="left:25.50px;top:111.70px;" width="15.60" height="15.60" viewBox="0 0 20 20"><path d="M2.4 17.6L17.6 2.4" stroke="#dcdcdc" fill="none" stroke-width="1.7"/></svg>
<svg style="left:47.90px;top:111.70px;" width="15.60" height="15.60" viewBox="0 0 20 20"><rect x="2.2" y="2.2" width="15.6" height="15.6" stroke="#dcdcdc" fill="none" stroke-width="1.7"/></svg>
<svg style="left:70.30px;top:111.70px;" width="15.60" height="15.60" viewBox="0 0 20 20"><circle cx="10" cy="10" r="8" stroke="#dcdcdc" fill="none" stroke-width="1.7"/></svg>
<svg style="left:92.70px;top:111.70px;" width="15.60" height="15.60" viewBox="0 0 20 20"><path d="M7 2.4H17.8V12L12.2 17.8H2.2V8.4Z" stroke="#dcdcdc" fill="none" stroke-width="1.7" stroke-linejoin="round"/></svg>
<svg style="left:115.10px;top:111.70px;" width="15.60" height="15.60" viewBox="0 0 20 20"><path d="M9 1.6L3.2 17.8L17.8 10L3 4" stroke="#dcdcdc" fill="none" stroke-width="1.7" stroke-linejoin="round" stroke-linecap="round"/></svg>
<svg style="left:137.50px;top:111.70px;" width="15.60" height="15.60" viewBox="0 0 20 20"><path d="M2.6 18.4C3 10 6 5.4 10 5.4C14 5.4 17 10 17.4 18.4" stroke="#dcdcdc" fill="none" stroke-width="1.7"/><path d="M3 2.8L10 5.4L17 2.8" stroke="#dcdcdc" fill="none" stroke-width="1.2"/><circle cx="3.4" cy="3" r="1.7" stroke="#dcdcdc" fill="none" stroke-width="1.1"/><circle cx="16.6" cy="3" r="1.7" stroke="#dcdcdc" fill="none" stroke-width="1.1"/></svg>
<svg style="left:159.90px;top:111.70px;" width="15.60" height="15.60" viewBox="0 0 20 20"><path d="M3.4 8.4C8 3 13 2.6 16 3.6M12.6 3.4C10.4 8 10.4 12 11.4 16" stroke="#dcdcdc" fill="none" stroke-width="1.7"/><circle cx="3" cy="8.8" r="1.8" stroke="#dcdcdc" fill="none" stroke-width="1.1"/><circle cx="16.6" cy="3.6" r="1.8" stroke="#dcdcdc" fill="none" stroke-width="1.1"/><circle cx="11.6" cy="17" r="1.8" stroke="#dcdcdc" fill="none" stroke-width="1.1"/></svg>
<svg style="left:182.30px;top:111.70px;" width="15.60" height="15.60" viewBox="0 0 20 20"><path d="M3.2 3.4C10 1.6 16.4 3 17 7C17.4 11.4 11 15.6 2.6 17.6" stroke="#dcdcdc" fill="none" stroke-width="1.7" stroke-linecap="round"/><circle cx="10.6" cy="7.6" r="1.2" fill="#dcdcdc"/></svg>
<svg style="left:204.70px;top:111.70px;" width="15.60" height="15.60" viewBox="0 0 20 20"><path d="M3 6.4L17.6 2.4L13.8 17" stroke="#dcdcdc" fill="none" stroke-width="1.6"/><path d="M17.2 2.8L5.4 14.6" stroke="#dcdcdc" fill="none" stroke-width="1.8"/><circle cx="5.8" cy="5.6" r="1.7" fill="#dcdcdc"/><circle cx="14.4" cy="14.2" r="1.7" fill="#dcdcdc"/><circle cx="5.4" cy="14.8" r="2" fill="#dcdcdc"/></svg>
<svg style="left:3.10px;top:139.00px;" width="15.60" height="15.60" viewBox="0 0 20 20"><rect x="3" y="3" width="14" height="14" stroke="#dcdcdc" fill="none" stroke-width="1.6"/><rect x="8.8" y="8.8" width="2.4" height="2.4" fill="#dcdcdc"/><rect x="1.2" y="1.2" width="3.6" height="3.6" fill="#dcdcdc"/><rect x="1.2" y="15.2" width="3.6" height="3.6" fill="#dcdcdc"/><rect x="15.2" y="1.2" width="3.6" height="3.6" fill="#dcdcdc"/><rect x="15.2" y="15.2" width="3.6" height="3.6" fill="#dcdcdc"/></svg>
<svg style="left:25.50px;top:139.00px;" width="15.60" height="15.60" viewBox="0 0 20 20"><path d="M10 1L13 4.6H11V9H15.4V7L19 10L15.4 13V11H11V15.4H13L10 19L7 15.4H9V11H4.6V13L1 10L4.6 7V9H9V4.6H7Z" fill="#dcdcdc"/></svg>
<svg style="left:47.90px;top:139.00px;" width="15.60" height="15.60" viewBox="0 0 20 20"><path d="M5.4 1V14.6H19M1 5.4H14.6V19" stroke="#dcdcdc" fill="none" stroke-width="1.9"/></svg>
<svg style="left:2.90px;top:166.30px;" width="16.00" height="16.00" viewBox="0 0 20 20"><defs><linearGradient id="gr1"><stop offset="0" stop-color="#3a3a3a"/><stop offset="1" stop-color="#e8e8e8"/></linearGradient></defs><rect x="1.6" y="1.6" width="16.8" height="16.8" fill="url(#gr1)" stroke="#dcdcdc" stroke-width="1.5"/></svg>
<svg style="left:25.50px;top:166.50px;" width="15.60" height="15.60" viewBox="0 0 20 20"><path d="M2.2 17.8L3 14.4L10.6 6.8L13.2 9.4L5.6 17Z" stroke="#dcdcdc" fill="none" stroke-width="1.4" stroke-linejoin="round"/><path d="M9.6 4.6L11 3.2L12.2 4.4L14.4 2.2C15.6 1 17.2 1 18 1.8C18.8 2.8 18.8 4.4 17.8 5.4L15.6 7.8L16.8 9L15.4 10.4Z" fill="#dcdcdc"/></svg>
<svg style="left:47.90px;top:166.50px;" width="15.60" height="15.60" viewBox="0 0 20 20"><path d="M12.2 6.6L16.6 2.2C17.6 1.4 18.6 2.4 17.8 3.4L13.4 7.8ZM11.4 7.4L12.6 8.6C12.6 11 10.6 12.6 6.6 12.8C8 11.6 7.8 10.4 8.4 9C9 7.8 10.2 7.2 11.4 7.4Z" fill="#dcdcdc"/><circle cx="17.4" cy="13.1" r="1.2" fill="#dcdcdc"/><circle cx="12.9" cy="17.5" r="1.2" fill="#dcdcdc"/><circle cx="6.7" cy="17.3" r="1.2" fill="#dcdcdc"/><circle cx="2.5" cy="12.7" r="1.2" fill="#dcdcdc"/><circle cx="2.8" cy="6.5" r="1.2" fill="#dcdcdc"/><circle cx="6.8" cy="2.7" r="1.2" fill="#dcdcdc"/><circle cx="17.4" cy="7.0" r="1.2" fill="#dcdcdc"/></svg>
<svg style="left:70.30px;top:166.50px;" width="15.60" height="15.60" viewBox="0 0 20 20"><path d="M13.4 1.6L18.4 6.6L6.6 18.4L1.6 13.4Z" fill="#dcdcdc"/><path d="M3.8 1.2L6.6 4L3.8 6.8L1 4Z" fill="#dcdcdc"/><path d="M16 13L18.8 15.8L16 18.6L13.2 15.8Z" fill="#dcdcdc"/></svg>
<svg style="left:92.70px;top:166.50px;" width="15.60" height="15.60" viewBox="0 0 20 20"><path d="M8.6 1.6L16.8 9.8L9.4 17.2L1.2 9Z" fill="none" stroke="#dcdcdc" stroke-width="1.5" stroke-linejoin="round"/><path d="M2.6 9.6H15.6L9.4 16Z" fill="#dcdcdc"/><path d="M17.6 11.4C18.6 13.4 19.4 14.6 19.4 15.8A1.8 1.8 0 0 1 15.8 15.8C15.8 14.6 16.6 13.4 17.6 11.4Z" fill="#dcdcdc"/><path d="M8.6 1.6L6 0.6" stroke="#dcdcdc" stroke-width="1.3"/></svg>
<svg style="left:114.90px;top:166.30px;" width="16.00" height="16.00" viewBox="0 0 20 20"><circle cx="10" cy="10" r="8.4" stroke="#dcdcdc" fill="none" stroke-width="1.8" stroke-dasharray="3.6 2.4"/><circle cx="10" cy="10" r="4.6" stroke="#dcdcdc" fill="none" stroke-width="1.5"/><path d="M5.6 10A4.4 4.4 0 0 1 14.4 10Z" fill="#dcdcdc"/></svg>
<svg style="left:2.90px;top:193.60px;" width="16.00" height="16.00" viewBox="0 0 20 20"><path d="M1.6 1.6L18.4 18.4M18.4 1.6L1.6 18.4" stroke="#dcdcdc" fill="none" stroke-width="1.7"/><circle cx="10" cy="10" r="6.4" stroke="#dcdcdc" fill="none" stroke-width="1.5"/></svg>
<svg style="left:25.50px;top:193.80px;" width="15.60" height="15.60" viewBox="0 0 20 20"><path d="M2 17.6H15.4L10.6 9.4M2 17.6L16 3" stroke="#dcdcdc" fill="none" stroke-width="1.7" stroke-linejoin="round" stroke-linecap="round"/></svg>
<svg style="left:47.90px;top:193.80px;" width="15.60" height="15.60" viewBox="0 0 20 20"><path d="M11.4 1.4L18.6 8.6L16.4 9.2L13.6 12L13 16L4 7L8 6.4L10.8 3.6Z" fill="#dcdcdc"/><path d="M8.4 11.6L1.6 18.4" stroke="#dcdcdc" stroke-width="1.4" stroke-linecap="round"/></svg>
<div style="left:1.40px;top:213.50px;width:252.60px;height:10.60px;background:#444444;border:1px solid #363636;border-radius:3px;box-shadow:inset 0 1px 0 #525252;"></div>
<svg style="left:123.80px;top:216.80px;" width="7.00" height="4.40" viewBox="0 0 7 4.4"><path d="M0.4 0.6H6.6L3.5 4Z" fill="#b8b8b8"/></svg>
<div style="left:121.40px;top:227.80px;width:1.30px;height:1.30px;background:#9a9a9a;"></div>
<div style="left:123.90px;top:227.80px;width:1.30px;height:1.30px;background:#9a9a9a;"></div>
<div style="left:126.40px;top:227.80px;width:1.30px;height:1.30px;background:#9a9a9a;"></div>
<div style="left:128.90px;top:227.80px;width:1.30px;height:1.30px;background:#9a9a9a;"></div>
<div style="left:131.40px;top:227.80px;width:1.30px;height:1.30px;background:#9a9a9a;"></div>
<div style="left:133.90px;top:227.80px;width:1.30px;height:1.30px;background:#9a9a9a;"></div>
<svg style="left:1.30px;top:230.40px;" width="14.40" height="14.40" viewBox="0 0 20 20"><circle cx="10" cy="10" r="9" fill="none" stroke="#dcdcdc" stroke-width="1.7"/><rect x="5.2" y="9.6" width="9.4" height="4.8" fill="#dcdcdc"/><path d="M7 9.6V8A2.9 2.9 0 0 1 12.6 7.2" fill="none" stroke="#dcdcdc" stroke-width="1.6"/></svg>
<span style="left:20.90px;top:232.51px;font-size:10.5px;line-height:10.5px;color:#d6d6d6;letter-spacing:-0.484px;white-space:pre;">Palette</span>
<svg style="left:221.40px;top:232.40px;" width="12.00" height="11.40" viewBox="0 0 12 11.4"><rect x="4.4" y="0.8" width="6.8" height="5.6" fill="none" stroke="#dcdcdc" stroke-width="1.3"/><rect x="0.8" y="4.8" width="6.8" height="5.8" fill="#484848" stroke="#dcdcdc" stroke-width="1.3"/></svg>
<svg style="left:241.20px;top:233.20px;" width="9.40" height="9.40" viewBox="0 0 10 10"><path d="M0.8 0.8L9.2 9.2M9.2 0.8L0.8 9.2" stroke="#dcdcdc" stroke-width="1.3"/></svg>
<div style="left:0.80px;top:245.00px;width:240.40px;height:86.40px;background:#434343;"></div>
<svg style="left:1.70px;top:246.40px;" width="239.40" height="68.00" viewBox="0 0 239.4 68"><rect x="0.00" y="0.00" width="10.96" height="10.30" fill="#ffffff"/><rect x="11.96" y="0.00" width="10.96" height="10.30" fill="#f2f2f2"/><rect x="23.92" y="0.00" width="10.96" height="10.30" fill="#e6e6e6"/><rect x="35.88" y="0.00" width="10.96" height="10.30" fill="#d9d9d9"/><rect x="47.84" y="0.00" width="10.96" height="10.30" fill="#cccccc"/><rect x="59.80" y="0.00" width="10.96" height="10.30" fill="#bfbfbf"/><rect x="71.76" y="0.00" width="10.96" height="10.30" fill="#b3b3b3"/><rect x="83.72" y="0.00" width="10.96" height="10.30" fill="#a6a6a6"/><rect x="95.68" y="0.00" width="10.96" height="10.30" fill="#999999"/><rect x="107.64" y="0.00" width="10.96" height="10.30" fill="#8c8c8c"/><rect x="119.60" y="0.00" width="10.96" height="10.30" fill="#808080"/><rect x="131.56" y="0.00" width="10.96" height="10.30" fill="#737373"/><rect x="143.52" y="0.00" width="10.96" height="10.30" fill="#666666"/><rect x="155.48" y="0.00" width="10.96" height="10.30" fill="#595959"/><rect x="167.44" y="0.00" width="10.96" height="10.30" fill="#4d4d4d"/><rect x="179.40" y="0.00" width="10.96" height="10.30" fill="#404040"/><rect x="191.36" y="0.00" width="10.96" height="10.30" fill="#333333"/><rect x="203.32" y="0.00" width="10.96" height="10.30" fill="#262626"/><rect x="215.28" y="0.00" width="10.96" height="10.30" fill="#1a1a1a"/><rect x="227.24" y="0.00" width="10.96" height="10.30" fill="#000000"/><rect x="0.00" y="11.30" width="10.96" height="10.30" fill="#2c0000"/><rect x="11.96" y="11.30" width="10.96" height="10.30" fill="#760022"/><rect x="23.92" y="11.30" width="10.96" height="10.30" fill="#a82040"/><rect x="35.88" y="11.30" width="10.96" height="10.30" fill="#d40000"/><rect x="47.84" y="11.30" width="10.96" height="10.30" fill="#ff3a24"/><rect x="59.80" y="11.30" width="10.96" height="10.30" fill="#ff3c00"/><rect x="71.76" y="11.30" width="10.96" height="10.30" fill="#ff8c68"/><rect x="83.72" y="11.30" width="10.96" height="10.30" fill="#ffa518"/><rect x="95.68" y="11.30" width="10.96" height="10.30" fill="#ffe800"/><rect x="107.64" y="11.30" width="10.96" height="10.30" fill="#f2f82c"/><rect x="119.60" y="11.30" width="10.96" height="10.30" fill="#0e0e26"/><rect x="131.56" y="11.30" width="10.96" height="10.30" fill="#003058"/><rect x="143.52" y="11.30" width="10.96" height="10.30" fill="#30487c"/><rect x="155.48" y="11.30" width="10.96" height="10.30" fill="#0044a8"/><rect x="167.44" y="11.30" width="10.96" height="10.30" fill="#2478ff"/><rect x="179.40" y="11.30" width="10.96" height="10.30" fill="#78b4ff"/><rect x="191.36" y="11.30" width="10.96" height="10.30" fill="#a8c8ff"/><rect x="203.32" y="11.30" width="10.96" height="10.30" fill="#d2e6ff"/><rect x="215.28" y="11.30" width="10.96" height="10.30" fill="#eaf4ff"/><rect x="227.24" y="11.30" width="10.96" height="10.30" fill="#f4fcff"/><rect x="0.00" y="22.60" width="10.96" height="10.30" fill="#341008"/><rect x="11.96" y="22.60" width="10.96" height="10.30" fill="#6e2834"/><rect x="23.92" y="22.60" width="10.96" height="10.30" fill="#663830"/><rect x="35.88" y="22.60" width="10.96" height="10.30" fill="#a4422c"/><rect x="47.84" y="22.60" width="10.96" height="10.30" fill="#bc6640"/><rect x="59.80" y="22.60" width="10.96" height="10.30" fill="#d8925c"/><rect x="71.76" y="22.60" width="10.96" height="10.30" fill="#ffc890"/><rect x="83.72" y="22.60" width="10.96" height="10.30" fill="#ffe0c4"/><rect x="95.68" y="22.60" width="10.96" height="10.30" fill="#ffe6b8"/><rect x="107.64" y="22.60" width="10.96" height="10.30" fill="#f2e2c4"/><rect x="119.60" y="22.60" width="10.96" height="10.30" fill="#0c1c22"/><rect x="131.56" y="22.60" width="10.96" height="10.30" fill="#1e363e"/><rect x="143.52" y="22.60" width="10.96" height="10.30" fill="#2e524e"/><rect x="155.48" y="22.60" width="10.96" height="10.30" fill="#4c6c60"/><rect x="167.44" y="22.60" width="10.96" height="10.30" fill="#007e7c"/><rect x="179.40" y="22.60" width="10.96" height="10.30" fill="#42a8ac"/><rect x="191.36" y="22.60" width="10.96" height="10.30" fill="#68a8c8"/><rect x="203.32" y="22.60" width="10.96" height="10.30" fill="#a8d8b4"/><rect x="215.28" y="22.60" width="10.96" height="10.30" fill="#d6e2d8"/><rect x="227.24" y="22.60" width="10.96" height="10.30" fill="#ecf0ec"/><rect x="0.00" y="33.90" width="10.96" height="10.30" fill="#3a2000"/><rect x="11.96" y="33.90" width="10.96" height="10.30" fill="#644020"/><rect x="23.92" y="33.90" width="10.96" height="10.30" fill="#ba4600"/><rect x="35.88" y="33.90" width="10.96" height="10.30" fill="#ff7000"/><rect x="47.84" y="33.90" width="10.96" height="10.30" fill="#ff9400"/><rect x="59.80" y="33.90" width="10.96" height="10.30" fill="#ffb800"/><rect x="71.76" y="33.90" width="10.96" height="10.30" fill="#d89a10"/><rect x="83.72" y="33.90" width="10.96" height="10.30" fill="#c0b07c"/><rect x="95.68" y="33.90" width="10.96" height="10.30" fill="#d4b488"/><rect x="107.64" y="33.90" width="10.96" height="10.30" fill="#ecd090"/><rect x="119.60" y="33.90" width="10.96" height="10.30" fill="#102c1c"/><rect x="131.56" y="33.90" width="10.96" height="10.30" fill="#2a3e3a"/><rect x="143.52" y="33.90" width="10.96" height="10.30" fill="#205830"/><rect x="155.48" y="33.90" width="10.96" height="10.30" fill="#4a8c6e"/><rect x="167.44" y="33.90" width="10.96" height="10.30" fill="#44a070"/><rect x="179.40" y="33.90" width="10.96" height="10.30" fill="#388a5a"/><rect x="191.36" y="33.90" width="10.96" height="10.30" fill="#78c87c"/><rect x="203.32" y="33.90" width="10.96" height="10.30" fill="#aaccb0"/><rect x="215.28" y="33.90" width="10.96" height="10.30" fill="#a8f0f0"/><rect x="227.24" y="33.90" width="10.96" height="10.30" fill="#d0fcf0"/><rect x="0.00" y="45.20" width="10.96" height="10.30" fill="#261020"/><rect x="11.96" y="45.20" width="10.96" height="10.30" fill="#2c103c"/><rect x="23.92" y="45.20" width="10.96" height="10.30" fill="#46101e"/><rect x="35.88" y="45.20" width="10.96" height="10.30" fill="#4c2888"/><rect x="47.84" y="45.20" width="10.96" height="10.30" fill="#8c148c"/><rect x="59.80" y="45.20" width="10.96" height="10.30" fill="#c44c70"/><rect x="71.76" y="45.20" width="10.96" height="10.30" fill="#e03068"/><rect x="83.72" y="45.20" width="10.96" height="10.30" fill="#ff1490"/><rect x="95.68" y="45.20" width="10.96" height="10.30" fill="#ff68c8"/><rect x="107.64" y="45.20" width="10.96" height="10.30" fill="#ffccdc"/><rect x="119.60" y="45.20" width="10.96" height="10.30" fill="#1c3424"/><rect x="131.56" y="45.20" width="10.96" height="10.30" fill="#004420"/><rect x="143.52" y="45.20" width="10.96" height="10.30" fill="#288400"/><rect x="155.48" y="45.20" width="10.96" height="10.30" fill="#5c9c30"/><rect x="167.44" y="45.20" width="10.96" height="10.30" fill="#608400"/><rect x="179.40" y="45.20" width="10.96" height="10.30" fill="#88d82c"/><rect x="191.36" y="45.20" width="10.96" height="10.30" fill="#e0e020"/><rect x="203.32" y="45.20" width="10.96" height="10.30" fill="#c0f420"/><rect x="215.28" y="45.20" width="10.96" height="10.30" fill="#ecf080"/><rect x="227.24" y="45.20" width="10.96" height="10.30" fill="#f0fcc4"/><rect x="0.00" y="56.50" width="10.96" height="10.30" fill="#000000"/><rect x="11.96" y="56.50" width="10.96" height="10.30" fill="#800000"/><rect x="23.92" y="56.50" width="10.96" height="10.30" fill="#ff0000"/><rect x="35.88" y="56.50" width="10.96" height="10.30" fill="#ff0080"/><rect x="47.84" y="56.50" width="10.96" height="10.30" fill="#ff00ff"/><rect x="59.80" y="56.50" width="10.96" height="10.30" fill="#ff80ff"/><rect x="71.76" y="56.50" width="10.96" height="10.30" fill="#ff8080"/><rect x="83.72" y="56.50" width="10.96" height="10.30" fill="#ff8000"/><rect x="95.68" y="56.50" width="10.96" height="10.30" fill="#ffff00"/><rect x="107.64" y="56.50" width="10.96" height="10.30" fill="#ffff80"/><rect x="119.60" y="56.50" width="10.96" height="10.30" fill="#000080"/><rect x="131.56" y="56.50" width="10.96" height="10.30" fill="#400080"/><rect x="143.52" y="56.50" width="10.96" height="10.30" fill="#0000ff"/><rect x="155.48" y="56.50" width="10.96" height="10.30" fill="#8000ff"/><rect x="167.44" y="56.50" width="10.96" height="10.30" fill="#8080ff"/><rect x="179.40" y="56.50" width="10.96" height="10.30" fill="#00ffff"/><rect x="191.36" y="56.50" width="10.96" height="10.30" fill="#80ffff"/><rect x="203.32" y="56.50" width="10.96" height="10.30" fill="#80ff80"/><rect x="215.28" y="56.50" width="10.96" height="10.30" fill="#00ff00"/><rect x="227.24" y="56.50" width="10.96" height="10.30" fill="#00ff80"/><rect x="131.56" y="0" width="10.96" height="10.30" fill="#6484a6"/><rect x="134.36" y="2.6" width="5.2" height="5" fill="#8a8a8a"/></svg>
<div style="left:241.80px;top:246.00px;width:10.60px;height:85.00px;background:#404040;border:1px solid #383838;"></div>
<svg style="left:242.40px;top:247.40px;" width="9.60" height="9.60" viewBox="0 0 9.6 9.6"><rect x="0.3" y="0.3" width="9" height="9" rx="1.2" fill="#444" stroke="#585858" stroke-width="0.6"/><path d="M2 6.2L4.8 3.2L7.6 6.2Z" fill="#c0c0c0"/></svg>
<svg style="left:242.40px;top:320.40px;" width="9.60" height="9.60" viewBox="0 0 9.6 9.6"><rect x="0.3" y="0.3" width="9" height="9" rx="1.2" fill="#444" stroke="#585858" stroke-width="0.6"/><path d="M2 3.4L4.8 6.4L7.6 3.4Z" fill="#c0c0c0"/></svg>
<div style="left:1.60px;top:333.20px;width:251.00px;height:19.20px;background:#3e3e3e;border:1px solid #343434;border-radius:3px;"></div>
<div style="left:236.00px;top:334.20px;width:16.00px;height:17.20px;background:#484848;border-left:1px solid #3a3a3a;border-radius:0 3px 3px 0;"></div>
<div style="left:4.30px;top:336.40px;width:13.40px;height:13.00px;background:#737373;"></div>
<span style="left:21.60px;top:338.71px;font-size:10.5px;line-height:10.5px;color:#d6d6d6;letter-spacing:-0.589px;white-space:pre;">Grey 115</span>
<svg style="left:240.00px;top:341.20px;" width="7.40" height="4.60" viewBox="0 0 7.4 4.6"><path d="M0.4 0.6H7L3.7 4.2Z" fill="#b4b4b4"/></svg>
<span style="left:1.10px;top:355.01px;font-size:10.5px;line-height:10.5px;color:#d6d6d6;letter-spacing:-0.138px;white-space:pre;">Default</span>
<svg style="left:4.30px;top:368.70px;" width="14.00" height="13.40" viewBox="0 0 14 13.4"><rect x="0" y="0" width="14" height="13.4" fill="#e4e4e4"/><rect x="1.2" y="1.0" width="3.2" height="3.2" fill="#1a5fd0"/><rect x="5.4" y="1.0" width="3.2" height="3.2" fill="#1aa0d8"/><rect x="9.6" y="1.0" width="3.2" height="3.2" fill="#18b8a0"/><rect x="1.2" y="5.0" width="3.2" height="3.2" fill="#d01818"/><rect x="5.4" y="5.0" width="3.2" height="3.2" fill="#d018a0"/><rect x="9.6" y="5.0" width="3.2" height="3.2" fill="#9018d0"/><rect x="1.2" y="9.0" width="3.2" height="3.2" fill="#e08c18"/><rect x="5.4" y="9.0" width="3.2" height="3.2" fill="#a0d018"/><rect x="9.6" y="9.0" width="3.2" height="3.2" fill="#30c030"/></svg>
<svg style="left:130.40px;top:369.40px;" width="12.40" height="12.40" viewBox="0 0 12.4 12.4"><path d="M6.2 0.4V12M0.4 6.2H12" stroke="#dcdcdc" stroke-width="1.5"/></svg>
<svg style="left:151.60px;top:369.00px;" width="13.00" height="13.00" viewBox="0 0 13 13"><path d="M1.2 11.8L2 8.6L9 1.6L11.6 4.2L4.6 11.2Z" fill="none" stroke="#dcdcdc" stroke-width="1.3" stroke-linejoin="round"/></svg>
<svg style="left:173.40px;top:369.00px;" width="13.40" height="13.40" viewBox="0 0 13.4 13.4"><path d="M1 1H9.8L12.4 3.6V12.4H1Z" fill="none" stroke="#dcdcdc" stroke-width="1.3" stroke-linejoin="round"/><rect x="3.6" y="1" width="5.4" height="3.6" fill="none" stroke="#dcdcdc" stroke-width="1.1"/><rect x="3.2" y="7.4" width="7" height="5" fill="none" stroke="#dcdcdc" stroke-width="1.1"/></svg>
<svg style="left:194.00px;top:368.60px;" width="14.40" height="14.40" viewBox="0 0 14.4 14.4"><path d="M1 1H13.4V13.4H1ZM5.1 1V13.4M9.3 1V13.4M1 5.1H13.4M1 9.3H13.4" fill="none" stroke="#dcdcdc" stroke-width="1.2"/></svg>
<svg style="left:216.40px;top:368.80px;" width="12.00" height="13.60" viewBox="0 0 12 13.6"><path d="M1.6 3.8H10.4V12.6C10.4 13 10 13.4 9.6 13.4H2.4C2 13.4 1.6 13 1.6 12.6Z" fill="#dcdcdc"/><rect x="0.4" y="1.6" width="11.2" height="1.6" fill="#dcdcdc"/><rect x="4" y="0.2" width="4" height="1.6" fill="#dcdcdc"/></svg>
<div style="left:234.50px;top:368.30px;width:18.20px;height:14.90px;background:#454545;border:1px solid #5a5a5a;border-radius:2.5px;"></div>
<span style="left:240.00px;top:371.18px;font-size:9px;line-height:9px;color:#d6d6d6;letter-spacing:0.000px;white-space:pre;">...</span>
<div style="left:121.40px;top:388.60px;width:1.30px;height:1.30px;background:#9a9a9a;"></div>
<div style="left:123.90px;top:388.60px;width:1.30px;height:1.30px;background:#9a9a9a;"></div>
<div style="left:126.40px;top:388.60px;width:1.30px;height:1.30px;background:#9a9a9a;"></div>
<div style="left:128.90px;top:388.60px;width:1.30px;height:1.30px;background:#9a9a9a;"></div>
<div style="left:131.40px;top:388.60px;width:1.30px;height:1.30px;background:#9a9a9a;"></div>
<div style="left:133.90px;top:388.60px;width:1.30px;height:1.30px;background:#9a9a9a;"></div>
<div style="left:129.20px;top:395.00px;width:116.60px;height:17.40px;background:#434343;border:1px solid #565656;border-bottom:none;border-radius:3px 3px 0 0;"></div>
<div style="left:1.00px;top:393.40px;width:126.80px;height:19.00px;background:#494949;border:1px solid #5c5c5c;border-bottom:none;border-radius:3px 3px 0 0;"></div>
<span style="left:10.30px;top:397.61px;font-size:10.5px;line-height:10.5px;color:#d6d6d6;letter-spacing:-0.389px;white-space:pre;">Advanced Color Selector</span>
<span style="left:139.00px;top:398.11px;font-size:10.5px;line-height:10.5px;color:#d6d6d6;letter-spacing:-0.383px;white-space:pre;">Specific Color Selector</span>
<div style="left:127.80px;top:411.80px;width:126.00px;height:1.00px;background:#565656;"></div>
<svg style="left:1.20px;top:413.00px;" width="14.40" height="14.40" viewBox="0 0 20 20"><circle cx="10" cy="10" r="9" fill="none" stroke="#dcdcdc" stroke-width="1.7"/><rect x="5.2" y="9.6" width="9.4" height="4.8" fill="#dcdcdc"/><path d="M7 9.6V8A2.9 2.9 0 0 1 12.6 7.2" fill="none" stroke="#dcdcdc" stroke-width="1.6"/></svg>
<span style="left:20.50px;top:414.71px;font-size:10.5px;line-height:10.5px;color:#d6d6d6;letter-spacing:-0.380px;white-space:pre;">Advanced Color Selector</span>
<svg style="left:221.20px;top:415.00px;" width="12.00" height="11.40" viewBox="0 0 12 11.4"><rect x="4.4" y="0.8" width="6.8" height="5.6" fill="none" stroke="#dcdcdc" stroke-width="1.3"/><rect x="0.8" y="4.8" width="6.8" height="5.8" fill="#484848" stroke="#dcdcdc" stroke-width="1.3"/></svg>
<svg style="left:241.40px;top:415.60px;" width="9.40" height="9.40" viewBox="0 0 10 10"><path d="M0.8 0.8L9.2 9.2M9.2 0.8L0.8 9.2" stroke="#dcdcdc" stroke-width="1.3"/></svg>
<svg style="left:7.00px;top:434.80px;" width="15.40" height="14.60" viewBox="0 0 15.4 14.6"><rect x="0.7" y="0.7" width="14" height="13.2" fill="none" stroke="#dcdcdc" stroke-width="1.3"/><path d="M0.7 3.6H14.7" stroke="#dcdcdc" stroke-width="1.2"/><rect x="2.6" y="5.6" width="2" height="6" fill="#dcdcdc"/><path d="M6.2 6.4H12.4M6.2 8.6H12.4M6.2 10.8H12.4" stroke="#dcdcdc" stroke-width="1.1"/></svg>
<div style="left:31.80px;top:428.20px;width:177.80px;height:177.80px;border-radius:50%;background:conic-gradient(hsl(90,100%,50%) 0deg,hsl(105,100%,50%) 15deg,hsl(120,100%,50%) 30deg,hsl(135,100%,50%) 45deg,hsl(150,100%,50%) 60deg,hsl(165,100%,50%) 75deg,hsl(180,100%,50%) 90deg,hsl(195,100%,50%) 105deg,hsl(210,100%,50%) 120deg,hsl(225,100%,50%) 135deg,hsl(240,100%,50%) 150deg,hsl(255,100%,50%) 165deg,hsl(270,100%,50%) 180deg,hsl(285,100%,50%) 195deg,hsl(300,100%,50%) 210deg,hsl(315,100%,50%) 225deg,hsl(330,100%,50%) 240deg,hsl(345,100%,50%) 255deg,hsl(0,100%,50%) 270deg,hsl(15,100%,50%) 285deg,hsl(30,100%,50%) 300deg,hsl(45,100%,50%) 315deg,hsl(60,100%,50%) 330deg,hsl(75,100%,50%) 345deg,hsl(90,100%,50%) 360deg);-webkit-mask:radial-gradient(circle,transparent 74.5px,#000 75.5px,#000 88.30000000000001px,transparent 89.2px);mask:radial-gradient(circle,transparent 74.5px,#000 75.5px,#000 88.30000000000001px,transparent 89.2px);"></div>
<div style="left:55.80px;top:443.00px;width:129.60px;height:112.20px;clip-path:polygon(50% 0,0 100%,100% 100%);background:linear-gradient(180deg,rgba(0,0,0,1) 0%,rgba(0,0,0,0) 100%),conic-gradient(from 150deg at 50% 0%,#0098e6 0deg,#ffffff 60deg);"></div>
<svg style="left:0.00px;top:430.00px;" width="240.00" height="180.00" viewBox="0 430 240 180"><circle cx="90" cy="492.4" r="3.4" fill="none" stroke="#f0f0f0" stroke-width="1"/><circle cx="90" cy="492.4" r="2.6" fill="none" stroke="#303030" stroke-width="0.7"/><path d="M189.6 545.6L202.8 551.2" stroke="#ffffff" stroke-width="1.3"/><path d="M190 544.4L203.2 550" stroke="#202020" stroke-width="1.1"/></svg>
<div style="left:239.70px;top:429.00px;width:13.80px;height:206.00px;background:#3a3a3a;"></div>
<svg style="left:240.60px;top:429.20px;" width="11.60" height="11.60" viewBox="0 0 11.6 11.6"><circle cx="5.8" cy="5.8" r="4.6" fill="none" stroke="#dcdcdc" stroke-width="1.4"/><path d="M2.6 2.6L9 9" stroke="#dcdcdc" stroke-width="1.4"/></svg>
<div style="left:239.70px;top:442.00px;width:13.80px;height:13.00px;background:#6e6e6e;"></div>
<div style="left:239.70px;top:455.00px;width:13.80px;height:13.60px;background:#e6ccd4;"></div>
<div style="left:239.70px;top:468.60px;width:13.80px;height:14.00px;background:#ffc8d8;"></div>
<div style="left:239.70px;top:482.60px;width:13.80px;height:13.70px;background:#b0b0b0;"></div>
<div style="left:239.70px;top:496.30px;width:13.80px;height:13.70px;background:#673e96;"></div>
<div style="left:239.70px;top:510.00px;width:13.80px;height:14.00px;background:#8080d8;"></div>
<div style="left:239.70px;top:524.00px;width:13.80px;height:13.70px;background:#8a8a8a;"></div>
<div style="left:239.70px;top:537.70px;width:13.80px;height:13.70px;background:#414141;"></div>
<div style="left:239.70px;top:551.40px;width:13.80px;height:13.60px;background:#1c1c1c;"></div>
<div style="left:239.70px;top:565.00px;width:13.80px;height:14.00px;background:#ffffff;"></div>
<div style="left:239.70px;top:579.00px;width:13.80px;height:13.80px;background:#10102c;"></div>
<div style="left:0.80px;top:607.60px;width:239.00px;height:7.80px;background:#7a7a7a;"></div>
<div style="left:0.80px;top:617.00px;width:239.00px;height:8.00px;background:linear-gradient(90deg,#000 0%,#5f5959 48%,#8c7c7c 52%,#f47e7e 100%);"></div>
<div style="left:0.80px;top:626.70px;width:239.00px;height:8.00px;background:linear-gradient(90deg,#000 0%,#6c6464 50%,#ffffff 100%);"></div>
<div style="left:116.40px;top:607.60px;width:9.20px;height:8.00px;background:#6e6e6e;border-left:1.2px solid #a8a8a8;border-right:1.2px solid #a8a8a8;"></div>
<div style="left:116.40px;top:617.00px;width:9.20px;height:8.00px;background:#6e6e6e;border-left:1.2px solid #a8a8a8;border-right:1.2px solid #a8a8a8;"></div>
<div style="left:116.40px;top:626.70px;width:9.20px;height:8.00px;background:#6e6e6e;border-left:1.2px solid #a8a8a8;border-right:1.2px solid #a8a8a8;"></div>
<svg style="left:1.20px;top:638.80px;" width="12.00" height="11.60" viewBox="0 0 12 11.6"><path d="M2 6.4A4.2 4.2 0 0 1 9.4 3.4" fill="none" stroke="#dcdcdc" stroke-width="1.3"/><path d="M10.8 1.2L10.4 5.2L6.8 3.8Z" fill="#dcdcdc"/><path d="M10.2 5.4A4.2 4.2 0 0 1 2.8 8.6" fill="none" stroke="#dcdcdc" stroke-width="1.3"/><path d="M1.4 10.8L1.8 6.8L5.4 8.2Z" fill="#dcdcdc"/></svg>
<div style="left:121.40px;top:654.20px;width:1.30px;height:1.30px;background:#9a9a9a;"></div>
<div style="left:123.90px;top:654.20px;width:1.30px;height:1.30px;background:#9a9a9a;"></div>
<div style="left:126.40px;top:654.20px;width:1.30px;height:1.30px;background:#9a9a9a;"></div>
<div style="left:128.90px;top:654.20px;width:1.30px;height:1.30px;background:#9a9a9a;"></div>
<div style="left:131.40px;top:654.20px;width:1.30px;height:1.30px;background:#9a9a9a;"></div>
<div style="left:133.90px;top:654.20px;width:1.30px;height:1.30px;background:#9a9a9a;"></div>
<svg style="left:1.20px;top:656.80px;" width="14.40" height="14.40" viewBox="0 0 20 20"><circle cx="10" cy="10" r="9" fill="none" stroke="#dcdcdc" stroke-width="1.7"/><rect x="5.2" y="9.6" width="9.4" height="4.8" fill="#dcdcdc"/><path d="M7 9.6V8A2.9 2.9 0 0 1 12.6 7.2" fill="none" stroke="#dcdcdc" stroke-width="1.6"/></svg>
<span style="left:20.40px;top:658.51px;font-size:10.5px;line-height:10.5px;color:#d6d6d6;letter-spacing:-0.534px;white-space:pre;">Brush Presets</span>
<svg style="left:221.00px;top:658.60px;" width="12.00" height="11.40" viewBox="0 0 12 11.4"><rect x="4.4" y="0.8" width="6.8" height="5.6" fill="none" stroke="#dcdcdc" stroke-width="1.3"/><rect x="0.8" y="4.8" width="6.8" height="5.8" fill="#484848" stroke="#dcdcdc" stroke-width="1.3"/></svg>
<svg style="left:241.20px;top:659.40px;" width="9.40" height="9.40" viewBox="0 0 10 10"><path d="M0.8 0.8L9.2 9.2M9.2 0.8L0.8 9.2" stroke="#dcdcdc" stroke-width="1.3"/></svg>
<div style="left:2.40px;top:673.50px;width:164.80px;height:17.50px;background:#444444;border:1px solid #363636;border-radius:3px;box-shadow:inset 0 1px 0 #525252;"></div>
<span style="left:4.70px;top:677.11px;font-size:10.5px;line-height:10.5px;color:#d6d6d6;letter-spacing:-0.090px;white-space:pre;">All</span>
<svg style="left:154.60px;top:680.60px;" width="7.40" height="4.60" viewBox="0 0 7.4 4.6"><path d="M0.4 0.6H7L3.7 4.2Z" fill="#b4b4b4"/></svg>
<div style="left:169.30px;top:673.50px;width:42.00px;height:17.50px;background:#454545;border:1px solid #383838;border-radius:3px;box-shadow:inset 0 1px 0 #545454;"></div>
<svg style="left:173.60px;top:674.80px;" width="9.00" height="13.40" viewBox="0 0 9 13.4"><path d="M1 0.8H8V12.4L4.5 9.4L1 12.4Z" fill="none" stroke="#dcdcdc" stroke-width="1.3" stroke-linejoin="round"/></svg>
<span style="left:186.40px;top:677.11px;font-size:10.5px;line-height:10.5px;color:#d6d6d6;letter-spacing:-0.843px;white-space:pre;">Tag</span>
<svg style="left:205.00px;top:686.00px;" width="5.00" height="3.40" viewBox="0 0 5 3.4"><path d="M0.3 0.4H4.7L2.5 3Z" fill="#b0b0b0"/></svg>
<svg style="left:216.20px;top:676.40px;" width="13.40" height="11.00" viewBox="0 0 13.4 11"><path d="M0.4 1.4H13M0.4 5.5H13M0.4 9.6H13" stroke="#dcdcdc" stroke-width="1.7"/></svg>
<svg style="left:235.80px;top:675.20px;" width="14.60" height="13.20" viewBox="0 0 14.6 13.2"><rect x="0.8" y="0.8" width="13" height="11.6" fill="none" stroke="#dcdcdc" stroke-width="1.3"/><path d="M7.3 0.8V5" stroke="#dcdcdc" stroke-width="1.2" stroke-dasharray="1.4 1"/></svg>
<div style="left:0.80px;top:692.00px;width:240.20px;height:189.60px;background:#3a3a3a;"></div>
<div style="left:241.20px;top:693.50px;width:12.00px;height:187.50px;background:#404040;border:1px solid #383838;"></div>
<svg style="left:242.20px;top:694.60px;" width="10.00" height="10.00" viewBox="0 0 10 10"><rect x="0.3" y="0.3" width="9.4" height="9.4" rx="1.2" fill="#444" stroke="#585858" stroke-width="0.6"/><path d="M2 6.4L5 3.2L8 6.4Z" fill="#c0c0c0"/></svg>
<svg style="left:242.20px;top:870.40px;" width="10.00" height="10.00" viewBox="0 0 10 10"><rect x="0.3" y="0.3" width="9.4" height="9.4" rx="1.2" fill="#444" stroke="#585858" stroke-width="0.6"/><path d="M2 3.6L5 6.8L8 3.6Z" fill="#c0c0c0"/></svg>
<div style="left:242.00px;top:755.50px;width:10.40px;height:22.00px;background:#4a4a4a;border:1px solid #5a5a5a;border-radius:1.5px;"></div>
<svg style="left:2.60px;top:693.40px;" width="49.80" height="32.40" viewBox="0 17.4 50 32.6"><rect x="0" y="0" width="50" height="50" fill="#cecece"/><path d="M24 17C26 22 33 22 38 17L44 16L40 26C34 30 26 28 24 17Z" fill="#c4b458"/><circle cx="22.6" cy="28.4" r="1.5" fill="#d4c45c"/><circle cx="24" cy="31" r="0.9" fill="#d4c45c"/><path d="M17 40C22 38 30 39 38 37C43 36 47 35 50 34V46C42 48 30 50 24 47C20 45 18 43 17 40Z" fill="#1c1c1c"/><path d="M17 40C20 44 24 47 30 48" stroke="#cfcfcf" stroke-width="1.2" stroke-dasharray="0.8 0.9" fill="none"/></svg>
<svg style="left:54.20px;top:693.40px;" width="49.80" height="32.40" viewBox="0 17.4 50 32.6"><rect x="0" y="0" width="50" height="50" fill="#cecece"/><path d="M20 28L27 18L40 18L50 22V24L36 26L24 33C20 34 18 31 20 28Z" fill="#e8b8a8"/><path d="M36 18L50 18V24L40 24Z" fill="#505868"/><path d="M17.6 31C18 28.6 20 27.4 22.4 28C25 29 24.8 32 22 33.4C19.6 34.4 17.4 33.4 17.6 31Z" fill="#1e2430"/><path d="M14 43L30 40L38 36L33 46L50 43" fill="none" stroke="#161616" stroke-width="2.6" stroke-linejoin="round"/><path d="M13 41L30 40" stroke="#cfcfcf" stroke-width="1.6" stroke-dasharray="1 1.4"/></svg>
<svg style="left:105.80px;top:693.40px;" width="49.80" height="32.40" viewBox="0 17.4 50 32.6"><rect x="0" y="0" width="50" height="50" fill="#cecece"/><path d="M21 29L28 19L42 17L50 19V22L36 26L25 33Z" fill="#e4b4a4"/><path d="M34 17L50 17V21L40 23Z" fill="#a87848"/><path d="M17.6 32C18 29.6 20 28.4 22.4 29C24 30 24 32.4 21.6 33.8C19.6 34.6 17.4 34 17.6 32Z" fill="#283040"/><path d="M15 38C16 46 24 46 30 42C36 39 42 42 50 38" fill="none" stroke="#505050" stroke-width="1" stroke-dasharray="2 0.8"/><path d="M33 42L40 39L47 40" stroke="#2a2a2a" stroke-width="2" stroke-dasharray="1.4 0.8" fill="none"/></svg>
<svg style="left:157.40px;top:693.40px;" width="49.80" height="32.40" viewBox="0 17.4 50 32.6"><rect x="0" y="0" width="50" height="50" fill="#cecece"/><path d="M22 29L30 20L44 17L50 18V21L38 26L26 32Z" fill="#e8d0b0"/><path d="M19 31.4C19.6 29.4 21.4 28.6 23.4 29.4L25.4 31.6L21 34C19.6 34 18.8 33 19 31.4Z" fill="#283848"/><path d="M15 38C16 46 24 47 30 43C36 40 42 42 50 38" fill="none" stroke="#8aa88c" stroke-width="0.9"/><path d="M33 43L40 40L47 41" stroke="#5c8460" stroke-width="1.6" stroke-dasharray="1.6 0.8" fill="none"/></svg>
<svg style="left:2.60px;top:727.80px;" width="49.80" height="49.80" viewBox="0 0 50 50"><rect x="0" y="0" width="50" height="50" fill="#cecece"/><defs><linearGradient id="wg1" x1="8" x2="49" y1="0" y2="0" gradientUnits="userSpaceOnUse"><stop offset="0" stop-color="#a678d8" stop-opacity="0.95"/><stop offset="0.35" stop-color="#b690e0" stop-opacity="0.8"/><stop offset="0.65" stop-color="#e6daf4" stop-opacity="0.9"/><stop offset="0.9" stop-color="#ffffff" stop-opacity="0.95"/></linearGradient></defs><path d="M13.5 32.5L21 38.0C24 40.6 28 41.6 33 41.2C40 40.6 45 43.0 50 45.5L50 50L13 50C8 48.0 8.5 40.0 13.5 32.5Z" fill="url(#wg1)"/><g transform="translate(3.2,-2)"><path d="M11.5 11.5C13 14 14.6 15.6 14.6 17.4A3.1 3.1 0 0 1 8.4 17.4C8.4 15.6 10 14 11.5 11.5Z" fill="#52b0f0"/><path d="M11.6 13.8C12.4 15.2 13.2 16.2 13.2 17.3A1.7 1.7 0 0 1 10.6 18.6C11.8 17.6 11.9 15.6 11.6 13.8Z" fill="#d8f0ff"/><path d="M8.2 10C8.9 11 9.5 11.7 9.5 12.4A1.3 1.3 0 0 1 6.9 12.4C6.9 11.7 7.5 11 8.2 10Z" fill="#52b0f0"/></g><path d="M36 13L50 0" stroke="#585858" stroke-width="7" stroke-linecap="butt"/><path d="M34.8 11.8L48.8 -1.2" stroke="#ffffff" stroke-opacity="0.28" stroke-width="2.1"/><path d="M28 21L36 13" stroke="#d8c8d8" stroke-width="7"/><path d="M19 24C22 20 26 19 29 20L32 24C32 29 27 32 22 30C19 29 18 27 19 24Z" fill="#9c5cd8"/></svg>
<svg style="left:54.20px;top:727.80px;" width="49.80" height="49.80" viewBox="0 0 50 50"><rect x="0" y="0" width="50" height="50" fill="#cecece"/><defs><linearGradient id="wg2" x1="8" x2="49" y1="0" y2="0" gradientUnits="userSpaceOnUse"><stop offset="0" stop-color="#a678d8" stop-opacity="0.95"/><stop offset="0.35" stop-color="#b690e0" stop-opacity="0.8"/><stop offset="0.65" stop-color="#e6daf4" stop-opacity="0.9"/><stop offset="0.9" stop-color="#ffffff" stop-opacity="0.95"/></linearGradient></defs><path d="M13.5 33.0L21 38.5C24 41.1 28 42.1 33 41.7C40 41.1 45 43.5 50 46.0L50 50L13 50C8 48.5 8.5 40.5 13.5 33.0Z" fill="url(#wg2)"/><g transform="translate(3.2,-2)"><path d="M11.5 11.5C13 14 14.6 15.6 14.6 17.4A3.1 3.1 0 0 1 8.4 17.4C8.4 15.6 10 14 11.5 11.5Z" fill="#52b0f0"/><path d="M11.6 13.8C12.4 15.2 13.2 16.2 13.2 17.3A1.7 1.7 0 0 1 10.6 18.6C11.8 17.6 11.9 15.6 11.6 13.8Z" fill="#d8f0ff"/><path d="M8.2 10C8.9 11 9.5 11.7 9.5 12.4A1.3 1.3 0 0 1 6.9 12.4C6.9 11.7 7.5 11 8.2 10Z" fill="#52b0f0"/></g><path d="M37 12L50 0" stroke="#74543c" stroke-width="7" stroke-linecap="butt"/><path d="M35.8 10.8L48.8 -1.2" stroke="#ffffff" stroke-opacity="0.28" stroke-width="2.1"/><path d="M29 21L37 12" stroke="#a8988c" stroke-width="7"/><path d="M31 17L35 15" stroke="#9c5cd8" stroke-width="3"/><path d="M16 23C20 21 25 20 29 20L33 24C33 30 30 34 26 33C22 34 19 30 16 23Z" fill="#7c40b4"/><path d="M20 24L24 32M25 22L28 32" stroke="#c8b0e0" stroke-width="0.8"/></svg>
<svg style="left:105.80px;top:727.80px;" width="49.80" height="49.80" viewBox="0 0 50 50"><rect x="0" y="0" width="50" height="50" fill="#cecece"/><defs><linearGradient id="wg3" x1="10" x2="50" y1="0" y2="0" gradientUnits="userSpaceOnUse"><stop offset="0" stop-color="#ae84dc" stop-opacity="0.9"/><stop offset="0.3" stop-color="#ae84dc" stop-opacity="0.75"/><stop offset="0.62" stop-color="#e8dcf4" stop-opacity="0.9"/><stop offset="0.85" stop-color="#ffffff" stop-opacity="0.95"/></linearGradient></defs><path d="M15.5 35C10.5 41 10 49 21 49.5C31 50 37 43 50 46" fill="none" stroke="url(#wg3)" stroke-width="8.5" stroke-linecap="round"/><g transform="translate(3.2,-2)"><path d="M11.5 11.5C13 14 14.6 15.6 14.6 17.4A3.1 3.1 0 0 1 8.4 17.4C8.4 15.6 10 14 11.5 11.5Z" fill="#52b0f0"/><path d="M11.6 13.8C12.4 15.2 13.2 16.2 13.2 17.3A1.7 1.7 0 0 1 10.6 18.6C11.8 17.6 11.9 15.6 11.6 13.8Z" fill="#d8f0ff"/><path d="M8.2 10C8.9 11 9.5 11.7 9.5 12.4A1.3 1.3 0 0 1 6.9 12.4C6.9 11.7 7.5 11 8.2 10Z" fill="#52b0f0"/></g><path d="M27 17L43 0H50V8L34 25Z" fill="#7c4c9c"/><path d="M38 9L44 3" stroke="#e8e0f0" stroke-width="2.4" stroke-linecap="round"/><path d="M26 17.4L33.6 25" stroke="#c060d8" stroke-width="1.6"/><path d="M25.6 17.6L33.4 25.4L22 31C20 32 18.6 30.6 19.6 28.6Z" fill="#c8c8cc"/><path d="M25.6 17.6L29 21L19.6 29Z" fill="#f0f0f0"/></svg>
<svg style="left:157.40px;top:727.80px;" width="49.80" height="49.80" viewBox="0 0 50 50"><rect x="0" y="0" width="50" height="50" fill="#cecece"/><defs><linearGradient id="wg4" x1="10" x2="50" y1="0" y2="0" gradientUnits="userSpaceOnUse"><stop offset="0" stop-color="#ae84dc" stop-opacity="0.9"/><stop offset="0.3" stop-color="#ae84dc" stop-opacity="0.75"/><stop offset="0.62" stop-color="#e8dcf4" stop-opacity="0.9"/><stop offset="0.85" stop-color="#ffffff" stop-opacity="0.95"/></linearGradient></defs><path d="M15.5 34C10.5 40 10 48 21 48.5C31 49 37 42 50 45" fill="none" stroke="url(#wg4)" stroke-width="7.0" stroke-linecap="round"/><g transform="translate(0,12)"><g transform="translate(3.2,-2)"><path d="M11.5 11.5C13 14 14.6 15.6 14.6 17.4A3.1 3.1 0 0 1 8.4 17.4C8.4 15.6 10 14 11.5 11.5Z" fill="#52b0f0"/><path d="M11.6 13.8C12.4 15.2 13.2 16.2 13.2 17.3A1.7 1.7 0 0 1 10.6 18.6C11.8 17.6 11.9 15.6 11.6 13.8Z" fill="#d8f0ff"/><path d="M8.2 10C8.9 11 9.5 11.7 9.5 12.4A1.3 1.3 0 0 1 6.9 12.4C6.9 11.7 7.5 11 8.2 10Z" fill="#52b0f0"/></g></g><path d="M8 12A5 5 0 0 1 16 9.4M17 13A5 5 0 0 1 9 15.6" fill="none" stroke="#484848" stroke-width="2.2"/><path d="M17.6 7L17 12L13 9.6Z" fill="#484848"/><path d="M7.4 18L8 13L12 15.4Z" fill="#484848"/><path d="M41 8L50 0" stroke="#7c5428" stroke-width="6" stroke-linecap="butt"/><path d="M39.8 6.8L48.8 -1.2" stroke="#ffffff" stroke-opacity="0.28" stroke-width="1.8"/><path d="M39 7L43 11" stroke="#d4a020" stroke-width="2.4"/><path d="M36 15L41 9" stroke="#909090" stroke-width="1.6"/><path d="M36 14C38 17 37 21 33 25L21 31C19 30 19.4 28 21 26L30 17C32 15 34 14 36 14Z" fill="#a8a8a8"/><path d="M36 14C34 14 31 16 29 18L21 27C24 24 30 20 36 14Z" fill="#e4e4e4"/></svg>
<svg style="left:2.60px;top:779.40px;" width="49.80" height="49.80" viewBox="0 0 50 50"><rect x="0" y="0" width="50" height="50" fill="#cecece"/><defs><linearGradient id="wg5" x1="8" x2="49" y1="0" y2="0" gradientUnits="userSpaceOnUse"><stop offset="0" stop-color="#a678d8" stop-opacity="0.95"/><stop offset="0.35" stop-color="#b690e0" stop-opacity="0.8"/><stop offset="0.65" stop-color="#e6daf4" stop-opacity="0.9"/><stop offset="0.9" stop-color="#ffffff" stop-opacity="0.95"/></linearGradient></defs><path d="M13.5 30.5L21 36.0C24 38.6 28 39.6 33 39.2C40 38.6 45 41.0 50 43.5L50 50L13 50C8 46.0 8.5 38.0 13.5 30.5Z" fill="url(#wg5)"/><g transform="translate(3.2,-2)"><path d="M11.5 11.5C13 14 14.6 15.6 14.6 17.4A3.1 3.1 0 0 1 8.4 17.4C8.4 15.6 10 14 11.5 11.5Z" fill="#52b0f0"/><path d="M11.6 13.8C12.4 15.2 13.2 16.2 13.2 17.3A1.7 1.7 0 0 1 10.6 18.6C11.8 17.6 11.9 15.6 11.6 13.8Z" fill="#d8f0ff"/><path d="M8.2 10C8.9 11 9.5 11.7 9.5 12.4A1.3 1.3 0 0 1 6.9 12.4C6.9 11.7 7.5 11 8.2 10Z" fill="#52b0f0"/></g><path d="M41 7L50 0" stroke="#3c68a4" stroke-width="5.4" stroke-linecap="butt"/><path d="M39.8 5.8L48.8 -1.2" stroke="#ffffff" stroke-opacity="0.28" stroke-width="1.6"/><path d="M39 5L43 9" stroke="#d4a020" stroke-width="2.4"/><path d="M35 15L41 8" stroke="#909090" stroke-width="1.6"/><path d="M35 14C37 17 36 21 32 25L21 30C19 29 19.4 27 21 25L29 17C31 15 33 14 35 14Z" fill="#a0a0a0"/><path d="M35 14C33 14 30 16 28 18L21 26C24 23 29 19 35 14Z" fill="#e8e8e8"/></svg>
<svg style="left:54.20px;top:779.40px;" width="49.80" height="49.80" viewBox="0 0 50 50"><rect x="0" y="0" width="50" height="50" fill="#cecece"/><defs><linearGradient id="wg6" x1="10" x2="50" y1="0" y2="0" gradientUnits="userSpaceOnUse"><stop offset="0" stop-color="#ae84dc" stop-opacity="0.9"/><stop offset="0.3" stop-color="#ae84dc" stop-opacity="0.75"/><stop offset="0.62" stop-color="#e8dcf4" stop-opacity="0.9"/><stop offset="0.85" stop-color="#ffffff" stop-opacity="0.95"/></linearGradient></defs><path d="M15.5 33C10.5 39 10 47 21 47.5C31 48 37 41 50 44" fill="none" stroke="url(#wg6)" stroke-width="7.0" stroke-linecap="round"/><g transform="translate(3.2,-2)"><path d="M11.5 11.5C13 14 14.6 15.6 14.6 17.4A3.1 3.1 0 0 1 8.4 17.4C8.4 15.6 10 14 11.5 11.5Z" fill="#52b0f0"/><path d="M11.6 13.8C12.4 15.2 13.2 16.2 13.2 17.3A1.7 1.7 0 0 1 10.6 18.6C11.8 17.6 11.9 15.6 11.6 13.8Z" fill="#d8f0ff"/><path d="M8.2 10C8.9 11 9.5 11.7 9.5 12.4A1.3 1.3 0 0 1 6.9 12.4C6.9 11.7 7.5 11 8.2 10Z" fill="#52b0f0"/></g><path d="M35 13L50 0" stroke="#7a44a4" stroke-width="6.4" stroke-linecap="butt"/><path d="M33.8 11.8L48.8 -1.2" stroke="#ffffff" stroke-opacity="0.28" stroke-width="1.9"/><path d="M29 19L35 13" stroke="#d0d0d4" stroke-width="6.4"/><path d="M21 21C24 19 28 19 30 21C31 24 30 27 27 28C23 29 20 27 20 24Z" fill="#3c2c2c"/></svg>
<svg style="left:105.80px;top:779.40px;" width="49.80" height="49.80" viewBox="0 0 50 50"><rect x="0" y="0" width="50" height="50" fill="#cecece"/><defs><linearGradient id="wg7" x1="10" x2="50" y1="0" y2="0" gradientUnits="userSpaceOnUse"><stop offset="0" stop-color="#ae84dc" stop-opacity="0.9"/><stop offset="0.3" stop-color="#ae84dc" stop-opacity="0.75"/><stop offset="0.62" stop-color="#e8dcf4" stop-opacity="0.9"/><stop offset="0.85" stop-color="#ffffff" stop-opacity="0.95"/></linearGradient></defs><path d="M15.5 33C10.5 39 10 47 21 47.5C31 48 37 41 50 44" fill="none" stroke="url(#wg7)" stroke-width="6.0" stroke-linecap="round"/><g transform="translate(3.2,-2)"><path d="M11.5 11.5C13 14 14.6 15.6 14.6 17.4A3.1 3.1 0 0 1 8.4 17.4C8.4 15.6 10 14 11.5 11.5Z" fill="#52b0f0"/><path d="M11.6 13.8C12.4 15.2 13.2 16.2 13.2 17.3A1.7 1.7 0 0 1 10.6 18.6C11.8 17.6 11.9 15.6 11.6 13.8Z" fill="#d8f0ff"/><path d="M8.2 10C8.9 11 9.5 11.7 9.5 12.4A1.3 1.3 0 0 1 6.9 12.4C6.9 11.7 7.5 11 8.2 10Z" fill="#52b0f0"/></g><path d="M36 11L50 0" stroke="#8450ac" stroke-width="4.6" stroke-linecap="butt"/><path d="M34.8 9.8L48.8 -1.2" stroke="#ffffff" stroke-opacity="0.28" stroke-width="1.4"/><path d="M27 20L36 11" stroke="#c8c8d0" stroke-width="3.4"/><path d="M31 16L33 14" stroke="#6c3c3c" stroke-width="4"/><path d="M21 24C23 21 26 20 28 21C28 24 26 27 22 28C20.6 27 20.4 25.4 21 24Z" fill="#4c2c2c"/></svg>
<svg style="left:157.40px;top:779.40px;" width="49.80" height="49.80" viewBox="0 0 50 50"><rect x="0" y="0" width="50" height="50" fill="#cecece"/><defs><linearGradient id="wg8" x1="8" x2="49" y1="0" y2="0" gradientUnits="userSpaceOnUse"><stop offset="0" stop-color="#a678d8" stop-opacity="0.95"/><stop offset="0.35" stop-color="#b690e0" stop-opacity="0.8"/><stop offset="0.65" stop-color="#e6daf4" stop-opacity="0.9"/><stop offset="0.9" stop-color="#ffffff" stop-opacity="0.95"/></linearGradient></defs><path d="M13.5 30.0L21 35.5C24 38.1 28 39.1 33 38.7C40 38.1 45 40.5 50 43.0L50 50L13 50C8 45.5 8.5 37.5 13.5 30.0Z" fill="url(#wg8)"/><g transform="translate(3.2,-2)"><path d="M11.5 11.5C13 14 14.6 15.6 14.6 17.4A3.1 3.1 0 0 1 8.4 17.4C8.4 15.6 10 14 11.5 11.5Z" fill="#52b0f0"/><path d="M11.6 13.8C12.4 15.2 13.2 16.2 13.2 17.3A1.7 1.7 0 0 1 10.6 18.6C11.8 17.6 11.9 15.6 11.6 13.8Z" fill="#d8f0ff"/><path d="M8.2 10C8.9 11 9.5 11.7 9.5 12.4A1.3 1.3 0 0 1 6.9 12.4C6.9 11.7 7.5 11 8.2 10Z" fill="#52b0f0"/></g><path d="M37 11L50 0" stroke="#3c74b0" stroke-width="5.6" stroke-linecap="butt"/><path d="M35.8 9.8L48.8 -1.2" stroke="#ffffff" stroke-opacity="0.28" stroke-width="1.7"/><path d="M33 15L38 10" stroke="#c8c8d0" stroke-width="5.6"/><path d="M22 22C24 18 29 16 32 18C33 21 31 26 26 28C22 28 20.6 25 22 22Z" fill="#b4783c"/></svg>
<svg style="left:2.60px;top:831.00px;" width="49.80" height="49.80" viewBox="0 0 50 50"><rect x="0" y="0" width="50" height="50" fill="#cecece"/><rect x="0" y="0" width="50" height="50" fill="#79b4e0"/><path d="M11 38C15 34 20 40 26 38C32 36 38 38 47 35V46C36 48 22 48 11 46Z" fill="#7c8cdc" opacity="0.75"/><path d="M12 40C18 36 22 42 28 40C34 38 40 40 46 37" stroke="#a8c0f4" stroke-width="2" fill="none"/><path d="M32 19L48 3" stroke="#34288c" stroke-width="7" stroke-linecap="butt"/><path d="M30.8 17.8L46.8 1.8" stroke="#ffffff" stroke-opacity="0.28" stroke-width="2.1"/><path d="M28 23L33.6 17.4" stroke="#a0c4ec" stroke-width="7"/><path d="M12 23C16 20 24 19 28 21L31 25C30 29 24 32 18 31C14 30 11 27 12 23Z" fill="#1c2038"/><path d="M5 9L9 5L12 8L8 12Z" fill="none" stroke="#282828" stroke-width="1.3"/><path d="M5 9L4.4 12.6L8 12" fill="#282828"/><path d="M13 11C14 12.6 15 13.6 15 14.8A2 2 0 0 1 11 14.8C11 13.6 12 12.6 13 11Z" fill="#d8f0ff"/></svg>
<svg style="left:54.20px;top:831.00px;" width="49.80" height="49.80" viewBox="0 0 50 50"><rect x="0" y="0" width="50" height="50" fill="#cecece"/><defs><linearGradient id="wgx" x1="8" x2="50" y1="0" y2="0" gradientUnits="userSpaceOnUse"><stop offset="0" stop-color="#a070d0" stop-opacity="0.85"/><stop offset="0.45" stop-color="#b48cdc" stop-opacity="0.7"/><stop offset="0.75" stop-color="#ffffff" stop-opacity="0.95"/></linearGradient></defs><path d="M9 35C18 35 28 39 50 40" fill="none" stroke="url(#wgx)" stroke-width="7" stroke-linecap="round"/><g transform="translate(3.2,-2)"><path d="M11.5 11.5C13 14 14.6 15.6 14.6 17.4A3.1 3.1 0 0 1 8.4 17.4C8.4 15.6 10 14 11.5 11.5Z" fill="#52b0f0"/><path d="M11.6 13.8C12.4 15.2 13.2 16.2 13.2 17.3A1.7 1.7 0 0 1 10.6 18.6C11.8 17.6 11.9 15.6 11.6 13.8Z" fill="#d8f0ff"/><path d="M8.2 10C8.9 11 9.5 11.7 9.5 12.4A1.3 1.3 0 0 1 6.9 12.4C6.9 11.7 7.5 11 8.2 10Z" fill="#52b0f0"/></g><path d="M35 14L50 0" stroke="#8c5c2c" stroke-width="6.6" stroke-linecap="butt"/><path d="M33.8 12.8L48.8 -1.2" stroke="#ffffff" stroke-opacity="0.28" stroke-width="2.0"/><path d="M28 21L35 14" stroke="#b8a89c" stroke-width="6.8"/><path d="M10 31C16 29 20 22 27 20L31 24C31 29 24 33 17 32C14 32 11 32 10 31Z" fill="#2c2424"/></svg>
<svg style="left:105.80px;top:831.00px;" width="49.80" height="49.80" viewBox="0 0 50 50"><rect x="0" y="0" width="50" height="50" fill="#cecece"/><path d="M33 17L50 0" stroke="#3c8cd0" stroke-width="4" stroke-linecap="butt"/><path d="M31.8 15.8L48.8 -1.2" stroke="#ffffff" stroke-opacity="0.28" stroke-width="1.2"/><path d="M28 22L33 17" stroke="#c0c4c8" stroke-width="3"/><path d="M21 29L28 22.4L29.6 24Z" fill="#8c4c1c"/><path d="M17 22C10 30 8 36 14 39C22 42 34 40 42 36" fill="none" stroke="#4c7cd4" stroke-width="1.2" stroke-dasharray="2 1"/><path d="M20 40C28 42 36 40 42 36" fill="none" stroke="#4c7cd4" stroke-width="2" stroke-dasharray="1.4 0.6"/></svg>
<svg style="left:157.40px;top:831.00px;" width="49.80" height="49.80" viewBox="0 0 50 50"><rect x="0" y="0" width="50" height="50" fill="#cecece"/><path d="M32 18L50 0" stroke="#3c8cd0" stroke-width="4" stroke-linecap="butt"/><path d="M30.8 16.8L48.8 -1.2" stroke="#ffffff" stroke-opacity="0.28" stroke-width="1.2"/><path d="M27 23L32 18" stroke="#c0c4c8" stroke-width="3"/><path d="M20 29L27 23.4L28.6 25Z" fill="#8c4c1c"/><path d="M12 32L26 35L36 30L30 40L50 34" fill="none" stroke="#4470d0" stroke-width="2.2" stroke-dasharray="2.4 0.5"/><path d="M36 30L50 36" stroke="#7c9ce0" stroke-width="0.8"/></svg>
<div style="left:2.20px;top:830.60px;width:50.60px;height:50.60px;border:2.4px solid #52749a;"></div>
<div style="left:1.50px;top:882.80px;width:174.20px;height:18.00px;background:#3b3b3b;border:1px solid #343434;border-radius:3px;"></div>
<span style="left:3.90px;top:886.71px;font-size:10.5px;line-height:10.5px;color:#8c8c8c;letter-spacing:-0.878px;white-space:pre;">Search</span>
<div style="left:182.20px;top:886.00px;width:10.60px;height:10.60px;background:#3c3c3c;"></div>
<svg style="left:183.20px;top:887.00px;" width="8.60" height="8.60" viewBox="0 0 8.6 8.6"><path d="M1 4.6L3.2 7.4L7.6 0.8" fill="none" stroke="#dcdcdc" stroke-width="1.2"/></svg>
<span style="left:197.80px;top:886.51px;font-size:10.5px;line-height:10.5px;color:#d6d6d6;letter-spacing:-0.291px;white-space:pre;">Filter in Tag</span>
<div style="left:1405.60px;top:481.00px;width:1.30px;height:1.30px;background:#8a8a8a;"></div>
<div style="left:1405.60px;top:483.50px;width:1.30px;height:1.30px;background:#8a8a8a;"></div>
<div style="left:1405.60px;top:486.00px;width:1.30px;height:1.30px;background:#8a8a8a;"></div>
<div style="left:1405.60px;top:488.50px;width:1.30px;height:1.30px;background:#8a8a8a;"></div>
<div style="left:1405.60px;top:491.00px;width:1.30px;height:1.30px;background:#8a8a8a;"></div>
<div style="left:1405.60px;top:493.50px;width:1.30px;height:1.30px;background:#8a8a8a;"></div>
<svg style="left:1409.60px;top:67.40px;" width="14.40" height="14.40" viewBox="0 0 20 20"><circle cx="10" cy="10" r="9" fill="none" stroke="#dcdcdc" stroke-width="1.7"/><rect x="5.2" y="9.6" width="9.4" height="4.8" fill="#dcdcdc"/><path d="M7 9.6V8A2.9 2.9 0 0 1 12.6 7.2" fill="none" stroke="#dcdcdc" stroke-width="1.6"/></svg>
<span style="left:1429.30px;top:69.51px;font-size:10.5px;line-height:10.5px;color:#d6d6d6;letter-spacing:-0.345px;white-space:pre;">Overview</span>
<svg style="left:1616.60px;top:69.00px;" width="12.00" height="11.40" viewBox="0 0 12 11.4"><rect x="4.4" y="0.8" width="6.8" height="5.6" fill="none" stroke="#dcdcdc" stroke-width="1.3"/><rect x="0.8" y="4.8" width="6.8" height="5.8" fill="#484848" stroke="#dcdcdc" stroke-width="1.3"/></svg>
<svg style="left:1636.80px;top:69.80px;" width="9.40" height="9.40" viewBox="0 0 10 10"><path d="M0.8 0.8L9.2 9.2M9.2 0.8L0.8 9.2" stroke="#dcdcdc" stroke-width="1.3"/></svg>
<div style="left:1408.60px;top:81.50px;width:241.40px;height:81.00px;background:#323232;"></div>
<div style="left:1488.00px;top:81.00px;width:82.00px;height:81.50px;background:#ffffff;"></div>
<svg style="left:1488.00px;top:81.00px;" width="82.00" height="81.50" viewBox="0 0 82 81.5"><g transform="translate(-35.08,-0.8) scale(0.0932)"><g fill="#9c9ce3"><path d="M659.5 470.0C659.2 458.4 660.6 446.6 660.2 440.5C659.8 434.4 658.5 439.7 657.2 433.7C655.9 427.7 653.2 412.7 652.3 404.6C651.4 396.5 651.2 393.3 651.7 385.2C652.2 377.1 653.9 365.3 655.6 356.1C657.3 346.9 659.3 336.9 662.0 330.2C664.7 323.5 666.3 321.3 671.7 315.7C677.1 310.1 685.8 303.0 694.4 296.3C703.0 289.6 714.4 281.0 723.5 275.3C732.6 269.6 739.6 265.8 749.3 262.3C759.0 258.8 769.8 256.1 781.7 254.3C793.6 252.5 809.7 251.7 820.5 251.7C831.3 251.7 836.7 253.0 846.4 254.3C856.1 255.6 869.6 258.1 878.7 259.7C887.9 261.3 893.2 260.9 901.3 264.0C909.4 267.1 918.6 272.3 927.2 278.5C935.8 284.7 946.0 293.6 953.0 301.1C960.0 308.7 965.2 315.7 969.2 323.8C973.2 331.9 975.6 341.0 977.3 349.6C979.0 358.2 979.6 366.9 979.6 375.5C979.6 384.1 978.8 393.3 977.3 401.4C975.8 409.5 973.9 416.4 970.9 424.0C967.9 431.6 963.0 438.6 959.5 446.7C956.0 454.8 951.8 465.0 949.8 472.5C947.8 480.0 947.2 486.8 947.2 491.9C947.2 497.0 952.9 495.0 950.0 503.0C947.1 511.0 941.7 530.5 930.0 540.0C918.3 549.5 901.7 555.8 880.0 560.0C858.3 564.2 826.7 565.0 800.0 565.0C773.3 565.0 740.0 564.2 720.0 560.0C700.0 555.8 689.7 548.3 680.0 540.0C670.3 531.7 665.4 521.7 662.0 510.0C658.6 498.3 659.8 481.6 659.5 470.0Z"/><path d="M660.0 438.0L660.0 530.0L705.0 562.0L711.0 570.5L764.0 573.0L767.0 573.8L811.0 575.2L815.0 576.6L870.0 592.0L905.0 560.0L950.0 510.0L947.0 480.0L800.0 400.0Z"/><path d="M700.0 520.0C688.0 505.0 674.6 474.0 668.0 470.0C661.4 466.0 661.9 488.9 660.4 496.0C658.9 503.1 659.9 506.3 659.0 512.3C658.1 518.2 657.2 525.8 654.9 531.7C652.6 537.6 650.1 542.2 645.2 547.9C640.4 553.6 633.3 560.3 625.8 565.7C618.2 571.1 609.6 575.6 599.9 580.2C590.2 584.8 580.0 589.2 567.6 593.2C555.2 597.2 540.6 601.3 525.5 604.5C510.4 607.7 490.5 610.7 477.0 612.6C463.5 614.5 454.4 615.0 444.7 615.8C435.0 616.6 425.5 616.5 418.8 617.6C412.1 618.7 407.8 620.4 404.3 622.3C400.8 624.2 398.6 626.4 398.0 628.9C397.4 631.4 398.4 635.1 400.5 637.0C402.6 638.9 405.5 639.5 410.7 640.1C415.9 640.7 423.9 640.8 431.7 640.5C439.5 640.2 448.4 637.7 457.6 638.5C466.8 639.3 477.0 643.9 486.7 645.5C496.4 647.1 508.2 646.9 515.8 648.0C523.3 649.1 523.4 652.8 532.0 652.0C540.6 651.2 555.2 645.0 567.6 643.0C580.0 641.0 595.5 642.2 606.3 640.0C617.1 637.8 624.1 634.0 632.2 630.0C640.3 626.0 648.6 620.2 654.9 616.0C661.2 611.8 665.1 608.7 670.0 604.5C674.9 600.3 679.5 595.4 684.0 591.0C688.5 586.6 693.0 581.9 697.0 578.0C701.0 574.1 701.0 570.5 708.2 567.5C715.4 564.5 741.4 567.9 740.0 560.0C738.6 552.1 712.0 535.0 700.0 520.0Z"/><path d="M700.0 570.0C691.4 571.8 708.5 568.2 708.2 571.0C708.0 573.8 701.2 579.8 698.5 586.7C695.8 593.6 693.4 604.0 692.0 612.6C690.6 621.2 691.7 631.1 690.4 638.4C689.1 645.7 687.2 650.8 684.0 656.2C680.8 661.6 674.8 667.1 671.0 670.8C667.2 674.5 666.7 676.8 661.3 678.5C655.9 680.2 646.8 679.6 638.7 681.0C630.6 682.4 621.4 686.3 612.8 687.0C604.2 687.7 595.1 685.3 587.0 685.3C578.9 685.3 573.5 687.7 564.3 687.0C555.1 686.3 541.2 682.3 532.0 681.0C522.8 679.7 516.0 679.7 509.3 679.0C502.6 678.3 496.1 677.7 492.0 677.0C487.9 676.3 486.6 674.9 484.5 675.0C482.4 675.1 480.2 676.2 479.2 677.5C478.2 678.8 477.4 680.6 478.6 683.0C479.9 685.4 483.3 689.0 486.7 691.8C490.1 694.5 493.9 696.8 499.0 699.5C504.1 702.2 509.7 705.4 517.3 708.2C524.9 711.0 535.4 714.3 544.5 716.4C553.6 718.5 561.2 719.8 571.8 720.9C582.4 722.0 597.6 722.5 608.2 722.7C618.8 723.0 628.8 722.2 635.5 722.4C642.2 722.6 641.4 725.4 648.4 724.1C655.4 722.8 667.8 717.1 677.5 714.4C687.2 711.7 698.5 711.5 706.6 708.0C714.7 704.5 720.1 698.0 726.0 693.4C731.9 688.8 737.9 685.9 742.2 680.5C746.5 675.1 749.9 668.6 751.9 661.1C753.9 653.6 754.5 643.8 754.5 635.2C754.5 626.6 751.3 617.5 751.9 609.4C752.5 601.3 756.2 592.6 758.3 586.7C760.4 580.8 764.3 578.2 764.6 573.8C764.9 569.3 770.8 560.6 760.0 560.0C749.2 559.4 708.6 568.2 700.0 570.0Z"/><path d="M790.0 555.0C782.2 554.7 769.9 566.3 765.9 574.4C761.9 582.5 764.0 592.2 765.9 603.5C767.8 614.8 774.1 629.9 777.0 642.3C779.9 654.7 784.0 668.2 783.5 677.9C783.0 687.6 778.6 694.3 773.8 700.5C768.9 706.7 760.1 711.2 754.4 715.0C748.7 718.8 742.9 720.6 739.8 723.1C736.7 725.6 735.3 727.9 735.6 730.2C735.9 732.5 737.7 735.5 741.4 736.7C745.1 738.0 749.5 738.8 757.6 737.7C765.7 736.6 779.7 733.7 789.9 730.2C800.1 726.7 811.5 721.7 819.0 716.7C826.5 711.8 831.4 705.9 835.2 700.5C839.0 695.1 841.4 689.7 841.7 684.3C842.0 678.9 839.8 674.0 836.8 668.1C833.8 662.2 827.3 655.2 824.0 648.7C820.7 642.2 818.9 636.0 817.0 629.0C815.1 622.0 813.2 615.5 812.5 606.7C811.8 597.9 816.2 584.6 812.5 576.0C808.8 567.4 797.8 555.3 790.0 555.0Z"/><path d="M840.0 555.0C830.4 553.3 818.2 570.1 814.4 577.6C810.6 585.1 815.0 592.7 817.4 600.2C819.8 607.8 822.5 613.7 828.7 622.9C834.9 632.1 844.9 645.5 854.6 655.2C864.3 664.9 876.2 673.6 887.0 681.1C897.8 688.6 910.7 695.6 919.3 700.5C927.9 705.4 933.1 708.1 938.7 710.2C944.4 712.4 950.0 714.0 953.2 713.4C956.4 712.8 957.8 709.6 958.1 706.9C958.4 704.2 958.1 702.0 954.9 697.2C951.7 692.4 945.7 687.0 938.7 677.9C931.7 668.8 921.4 654.2 912.8 642.3C904.2 630.4 893.8 615.8 887.0 606.7C880.2 597.7 879.8 596.6 872.0 588.0C864.2 579.4 849.6 556.7 840.0 555.0Z"/><path d="M870.0 552.0C877.5 552.4 885.0 558.4 895.0 562.5C905.0 566.6 919.2 572.3 930.0 576.5C940.8 580.7 951.2 584.8 960.0 587.5C968.8 590.2 973.0 590.9 983.0 593.0C993.0 595.1 1008.2 598.1 1020.0 600.0C1031.8 601.9 1044.0 600.8 1054.0 604.5C1064.0 608.2 1071.8 616.6 1079.9 622.3C1088.0 627.9 1096.0 634.5 1102.5 638.4C1109.0 642.3 1114.9 643.4 1118.7 645.6C1122.5 647.8 1124.9 649.4 1125.2 651.4C1125.5 653.4 1124.6 657.0 1120.3 657.8C1116.0 658.6 1110.3 657.0 1099.3 656.2C1088.2 655.4 1068.0 654.4 1054.0 653.0C1040.0 651.6 1023.8 649.4 1015.2 648.1C1006.6 646.8 1009.8 646.4 1002.3 645.0C994.8 643.6 979.7 642.7 970.0 640.0C960.3 637.3 954.2 633.0 944.0 629.0C933.8 625.0 918.2 621.2 908.5 616.0C898.8 610.8 893.4 604.0 885.9 598.0C878.4 592.0 869.2 586.3 863.2 580.0C857.2 573.7 848.9 564.7 850.0 560.0C851.1 555.3 862.5 551.6 870.0 552.0Z"/><path d="M900.0 535.0C911.7 536.7 933.3 549.5 950.0 555.0C966.7 560.5 983.3 564.8 1000.0 568.0C1016.7 571.2 1032.4 573.3 1050.0 574.0C1067.6 574.7 1091.6 573.1 1105.8 572.2C1120.0 571.4 1125.2 569.6 1134.9 568.9C1144.6 568.2 1155.9 567.6 1164.0 568.0C1172.1 568.4 1177.8 569.7 1183.4 571.2C1189.1 572.7 1195.1 575.0 1197.9 577.0C1200.7 579.0 1201.0 581.6 1200.2 583.5C1199.4 585.4 1196.5 587.3 1193.1 588.3C1189.7 589.3 1184.8 588.5 1180.0 589.3C1175.2 590.1 1171.0 592.0 1164.0 593.0C1157.0 594.0 1146.6 594.0 1138.0 595.0C1129.4 596.0 1120.8 597.2 1112.2 599.0C1103.6 600.8 1096.1 605.2 1086.4 606.0C1076.7 606.8 1064.8 604.8 1054.0 604.0C1043.2 603.2 1031.4 602.8 1021.7 601.0C1012.0 599.2 1005.0 596.2 995.8 593.0C986.6 589.8 978.0 586.0 966.7 582.0C955.4 578.0 937.6 572.3 927.9 569.0C918.2 565.7 914.4 564.3 908.5 562.0C902.6 559.7 897.0 557.8 892.3 555.0C887.5 552.2 878.7 548.3 880.0 545.0C881.3 541.7 888.3 533.3 900.0 535.0Z"/><path d="M930.0 480.0C937.9 477.0 944.1 489.2 947.2 491.9C950.4 494.6 946.7 492.8 948.9 496.2C951.1 499.6 954.5 508.0 960.2 512.3C965.9 516.6 973.7 519.7 982.9 522.0C992.1 524.3 1003.4 525.8 1015.2 525.9C1027.0 526.0 1039.5 524.7 1054.0 522.7C1068.5 520.7 1087.4 516.2 1102.5 514.0C1117.6 511.8 1133.3 510.5 1144.6 509.7C1155.9 508.9 1163.4 508.4 1170.4 509.1C1177.4 509.8 1182.0 511.9 1186.6 514.0C1191.2 516.1 1195.8 519.6 1197.9 522.0C1200.1 524.4 1200.3 526.8 1199.5 528.5C1198.7 530.2 1199.0 532.0 1193.1 532.4C1187.2 532.8 1172.1 529.6 1164.0 531.1C1155.9 532.6 1151.1 537.0 1144.6 541.4C1138.1 545.8 1130.6 553.3 1125.2 557.6C1119.8 561.9 1118.7 564.4 1112.2 567.3C1105.7 570.2 1093.9 572.2 1086.4 575.0C1078.9 577.8 1074.6 583.2 1067.0 584.0C1059.4 584.8 1049.6 581.0 1041.0 580.0C1032.4 579.0 1024.9 579.2 1015.2 578.0C1005.5 576.8 992.6 574.7 982.9 573.0C973.2 571.3 965.1 570.7 957.0 568.0C948.9 565.3 940.9 561.0 934.4 557.0C927.9 553.0 921.7 547.7 918.2 544.0C914.7 540.3 916.4 540.7 913.4 535.0C910.4 529.3 897.2 519.2 900.0 510.0C902.8 500.8 922.1 483.0 930.0 480.0Z"/></g><g fill="#8a6aae"><path d="M410.0 634.5C412.9 633.9 420.6 633.5 426.4 633.3C432.1 633.1 438.8 633.2 444.5 633.3C450.2 633.3 454.8 632.9 460.9 633.6C467.0 634.3 473.3 636.2 480.9 637.6C488.5 639.0 497.9 640.8 506.4 641.8C514.9 642.8 523.9 643.8 531.8 643.6C539.7 643.5 547.5 641.8 553.6 640.9C559.7 640.0 562.1 638.8 568.2 638.2C574.3 637.7 583.3 638.1 590.0 637.6C596.7 637.1 602.1 636.9 608.2 635.5C614.3 634.1 622.2 631.4 626.4 629.1C630.6 626.8 630.0 624.1 633.6 621.8C637.2 619.5 643.4 618.1 648.2 615.5C653.1 612.9 658.5 609.4 662.7 606.4C666.9 603.4 670.6 600.0 673.6 597.3C676.6 594.6 678.2 593.2 680.9 590.0C683.6 586.8 686.8 581.5 690.0 578.0C693.2 574.5 697.2 571.4 700.0 569.0C702.8 566.6 705.2 564.0 707.0 563.8C708.8 563.5 711.8 565.1 711.0 567.5C710.2 569.9 705.2 574.4 702.0 578.0C698.8 581.6 694.6 586.4 692.0 589.0C689.4 591.6 688.2 591.6 686.4 593.6C684.5 595.6 683.6 598.5 680.9 600.9C678.2 603.3 673.3 605.8 670.0 608.2C666.7 610.6 663.6 612.5 660.9 615.5C658.2 618.5 656.3 623.5 653.6 626.4C650.9 629.3 648.1 631.5 644.5 632.7C640.9 633.9 636.3 632.2 631.8 633.6C627.3 635.0 622.8 639.1 617.3 640.9C611.8 642.7 606.7 643.6 599.1 644.5C591.5 645.4 579.4 645.2 571.8 646.4C564.2 647.6 560.3 650.3 553.6 651.8C546.9 653.2 537.2 654.8 531.8 655.1C526.3 655.4 523.9 654.6 520.9 653.6C517.9 652.6 517.2 650.1 513.6 649.1C510.0 648.1 504.6 648.0 499.1 647.8C493.7 647.6 487.0 648.5 480.9 647.8C474.8 647.1 467.2 645.0 462.7 643.6C458.1 642.2 457.2 639.4 453.6 639.1C450.0 638.8 445.4 641.2 440.9 641.8C436.4 642.4 431.2 643.2 426.4 642.7C421.5 642.2 414.7 640.1 411.8 639.1C408.9 638.1 409.4 637.7 409.1 636.9C408.8 636.1 407.1 635.1 410.0 634.5Z"/><path d="M482.7 684.5C485.6 683.1 493.3 681.1 499.1 680.0C504.9 678.9 511.8 678.0 517.3 677.8C522.8 677.5 526.6 677.7 531.8 678.5C536.9 679.3 543.1 681.5 548.2 682.7C553.4 683.9 557.2 685.4 562.7 685.5C568.2 685.6 575.8 683.3 580.9 683.1C586.0 682.9 589.0 684.0 593.6 684.5C598.2 685.0 603.1 687.0 608.2 686.4C613.4 685.8 619.0 682.4 624.5 680.9C630.0 679.4 635.1 678.0 640.9 677.6C646.7 677.2 654.7 678.2 659.1 678.7C663.5 679.2 665.9 680.1 667.3 680.9C668.7 681.7 671.1 682.7 667.3 683.6C663.5 684.5 651.6 685.5 644.5 686.4C637.4 687.3 630.5 688.2 624.5 689.1C618.5 690.0 615.5 691.0 608.2 691.8C600.9 692.5 590.0 693.2 580.9 693.6C571.8 694.0 564.2 694.1 553.6 694.2C543.0 694.3 526.4 694.2 517.3 694.0C508.2 693.8 504.6 693.2 499.1 692.7C493.6 692.2 487.4 691.6 484.5 690.9C481.6 690.1 481.8 689.3 481.5 688.2C481.2 687.1 479.8 685.9 482.7 684.5Z"/><path d="M863.2 577.0C865.7 577.2 871.3 578.9 876.2 581.9C881.0 584.8 886.4 590.5 892.3 594.8C898.3 599.1 904.2 603.7 911.7 607.7C919.3 611.8 929.0 615.0 937.6 619.0C946.2 623.1 954.9 629.0 963.5 632.0C972.1 634.9 980.7 634.9 989.3 636.8C998.0 638.7 1006.6 641.8 1015.2 643.3C1023.8 644.8 1032.5 644.9 1041.1 645.6C1049.7 646.3 1059.4 647.3 1067.0 647.5C1074.5 647.7 1081.0 646.6 1086.4 646.5C1091.7 646.4 1096.9 646.2 1099.3 646.9C1101.7 647.6 1103.1 649.2 1100.9 650.7C1098.7 652.3 1092.0 655.6 1086.4 656.2C1080.7 656.9 1074.5 655.4 1067.0 654.6C1059.4 653.8 1049.2 651.8 1041.1 651.4C1033.0 651.0 1024.9 653.2 1018.4 652.4C1012.0 651.5 1009.8 648.0 1002.3 646.5C994.7 645.0 981.3 644.9 973.2 643.3C965.1 641.7 959.7 639.5 953.8 636.8C947.8 634.1 943.5 629.8 937.6 627.1C931.7 624.4 924.1 622.8 918.2 620.7C912.3 618.5 907.4 617.4 902.0 614.2C896.6 611.0 891.3 605.6 885.9 601.3C880.5 596.9 873.7 591.7 869.7 588.3C865.7 584.9 862.7 582.8 861.6 580.9C860.5 579.0 860.8 576.8 863.2 577.0Z"/><path d="M890.7 553.7C893.4 553.5 902.3 554.2 908.5 556.0C914.7 557.8 919.8 561.8 927.9 564.7C936.0 567.7 946.8 570.1 957.0 573.8C967.2 577.4 979.6 583.5 989.3 586.7C999.0 589.9 1005.5 591.5 1015.2 593.2C1024.9 594.9 1036.8 596.2 1047.6 597.1C1058.3 597.9 1070.2 598.9 1079.9 598.0C1089.6 597.1 1097.1 593.6 1105.8 591.6C1114.4 589.6 1123.0 587.7 1131.6 586.1C1140.2 584.4 1149.7 582.9 1157.5 581.9C1165.3 580.8 1174.3 579.6 1178.5 579.6C1182.7 579.6 1182.2 580.9 1182.7 581.9C1183.3 582.8 1183.3 583.5 1181.7 585.1C1180.2 586.7 1177.2 589.8 1173.7 591.6C1170.2 593.3 1164.5 595.5 1160.7 595.8C1157.0 596.0 1154.8 593.0 1151.0 593.2C1147.3 593.4 1143.5 596.2 1138.1 597.1C1132.7 597.9 1125.2 596.8 1118.7 598.0C1112.2 599.3 1105.8 602.9 1099.3 604.5C1092.8 606.1 1086.4 607.5 1079.9 607.7C1073.4 608.0 1069.1 606.8 1060.5 606.1C1051.9 605.4 1037.8 604.6 1028.1 603.5C1018.4 602.4 1009.8 601.9 1002.3 599.6C994.7 597.4 990.4 593.2 982.9 589.9C975.3 586.7 966.7 583.6 957.0 580.2C947.3 576.9 933.3 572.5 924.7 569.9C916.0 567.3 910.7 566.8 905.3 564.7C899.9 562.7 894.8 559.4 892.3 557.6C889.9 555.8 888.0 554.0 890.7 553.7Z"/><path d="M913.4 533.4C915.5 534.2 919.6 539.3 924.7 543.1C929.8 546.8 937.1 552.6 944.1 556.0C951.1 559.4 958.1 561.1 966.7 563.4C975.3 565.7 985.6 568.3 995.8 569.9C1006.1 571.5 1018.4 572.5 1028.1 573.1C1037.8 573.8 1045.4 574.1 1054.0 573.8C1062.6 573.5 1071.3 572.7 1079.9 571.2C1088.5 569.7 1099.3 568.3 1105.8 564.7C1112.2 561.1 1113.3 554.2 1118.7 549.5C1124.1 544.8 1132.2 539.8 1138.1 536.6C1144.0 533.4 1149.9 530.9 1154.3 530.1C1158.6 529.3 1162.3 530.8 1164.0 531.7C1165.6 532.7 1166.1 533.7 1164.0 535.6C1161.8 537.5 1155.9 540.2 1151.0 543.1C1146.2 545.9 1139.2 549.0 1134.9 552.8C1130.5 556.5 1128.4 562.8 1125.2 565.7C1121.9 568.5 1119.8 568.8 1115.5 569.9C1111.1 571.0 1104.7 570.4 1099.3 572.2C1093.9 573.9 1088.0 577.7 1083.1 580.2C1078.3 582.8 1074.5 586.3 1070.2 587.4C1065.9 588.4 1062.1 587.6 1057.3 586.7C1052.4 585.8 1047.0 582.5 1041.1 581.9C1035.2 581.2 1029.2 583.6 1021.7 582.8C1014.1 582.0 1004.4 578.2 995.8 577.0C987.2 575.8 977.5 576.5 969.9 575.4C962.4 574.3 957.0 573.1 950.5 570.5C944.1 568.0 936.5 563.7 931.1 560.2C925.8 556.7 921.4 553.2 918.2 549.5C915.0 545.9 912.5 540.9 911.7 538.2C910.9 535.5 911.2 532.5 913.4 533.4Z"/></g><g fill="none" stroke="#8a6aae" stroke-linecap="round" stroke-linejoin="round"><path d="M635.5 720.9C637.6 721.4 641.4 725.2 648.4 724.1C655.4 723.0 667.8 717.1 677.5 714.4C687.2 711.7 698.5 711.5 706.6 708.0C714.7 704.5 720.1 698.0 726.0 693.4C731.9 688.8 737.9 685.9 742.2 680.5C746.5 675.1 749.9 668.6 751.9 661.1C753.9 653.6 754.5 643.8 754.5 635.2C754.5 626.6 751.3 617.5 751.9 609.4C752.5 601.3 756.1 592.6 758.3 586.7C760.4 580.8 763.7 575.9 764.8 573.8" stroke-width="7.6"/><path d="M811.0 576.0C810.8 581.1 809.2 597.8 810.0 606.7C810.8 615.6 813.8 622.3 815.8 629.3C817.8 636.3 819.3 642.2 822.3 648.7C825.3 655.2 832.0 662.2 833.6 668.1C835.2 674.0 834.4 678.9 832.0 684.3C829.6 689.7 823.9 695.4 819.0 700.5C814.1 705.6 809.4 711.2 802.9 715.0C796.4 718.8 786.4 721.6 780.2 723.1C774.0 724.6 768.1 723.9 765.7 724.1" stroke-width="7.4"/></g><path d="M730.0 325.4C730.8 323.0 731.6 321.9 736.4 322.2C741.2 322.5 751.5 323.5 759.0 327.0C766.5 330.5 775.5 336.7 781.7 343.2C787.9 349.7 792.4 358.3 796.2 365.8C800.0 373.3 803.4 381.7 804.3 388.4C805.2 395.1 803.9 401.3 801.7 406.2C799.6 411.1 795.8 415.2 791.4 417.6C787.0 420.0 780.6 421.4 775.2 420.8C769.8 420.2 763.6 418.6 759.0 414.3C754.4 410.0 751.2 403.5 747.7 394.9C744.2 386.3 740.7 372.3 738.0 362.6C735.3 352.9 732.9 342.9 731.6 336.7C730.3 330.5 729.2 327.8 730.0 325.4Z" fill="#c5c5c7"/><path d="M754.2 336.7C756.1 337.0 758.3 339.4 762.3 343.2C766.3 347.0 774.1 353.9 778.4 359.3C782.7 364.7 786.4 370.6 788.1 375.5C789.8 380.4 789.6 384.7 788.8 388.4C788.0 392.1 785.8 395.8 783.3 397.5C780.8 399.2 776.8 399.8 773.6 398.8C770.4 397.8 766.3 395.3 763.9 391.7C761.5 388.1 760.6 383.0 759.0 377.1C757.4 371.2 755.5 362.0 754.2 356.1C752.9 350.2 751.0 344.8 751.0 341.6C751.0 338.4 752.3 336.4 754.2 336.7Z" fill="#8f8f8f"/><path d="M867.4 304.4C870.1 303.3 873.6 304.9 878.7 307.6C883.8 310.3 891.6 314.6 898.1 320.5C904.6 326.4 912.1 335.1 917.5 343.2C922.9 351.3 928.0 360.4 930.4 369.0C932.8 377.6 933.6 388.7 932.0 394.9C930.4 401.1 925.3 403.8 920.7 406.2C916.1 408.6 910.0 410.3 904.6 409.5C899.2 408.7 893.2 406.0 888.4 401.4C883.5 396.8 879.3 389.0 875.5 382.0C871.7 375.0 868.2 367.4 865.8 359.3C863.4 351.2 861.4 341.0 860.9 333.5C860.4 326.0 861.4 319.0 862.5 314.1C863.6 309.2 864.7 305.5 867.4 304.4Z" fill="#c5c5c7"/><path d="M877.1 321.2C879.4 321.5 882.2 322.8 886.8 327.0C891.4 331.2 899.5 339.9 904.6 346.4C909.7 352.9 915.6 360.1 917.5 365.8C919.4 371.5 917.8 376.6 915.9 380.4C914.0 384.2 909.7 387.6 906.2 388.4C902.7 389.2 898.1 387.9 894.9 385.2C891.7 382.5 889.2 378.2 886.8 372.3C884.4 366.4 882.5 356.1 880.3 349.6C878.1 343.1 875.0 337.5 873.8 333.5C872.6 329.5 872.3 327.4 872.9 325.4C873.5 323.3 874.8 320.9 877.1 321.2Z" fill="#8f8f8f"/><g fill="none" stroke-linecap="round"><path d="M756.8 297.2L765 304.6" stroke="#8c8cba" stroke-width="6.6"/><path d="M848.3 293.6L843.6 302.3" stroke="#8c8cba" stroke-width="6.6"/><path d="M824.6 474.5C828 484 832 491 837 495.5C843 501 851 503.5 858 500.5C866 497 870 490 872.6 473.6" stroke="#ecd9e6" stroke-width="7"/></g></g></svg>
<div style="left:1477.40px;top:90.30px;width:105.40px;height:73.00px;border:1px solid #54779b;border-bottom:1px dashed #54779b;"></div>
<div style="left:1410.60px;top:166.50px;width:92.40px;height:17.60px;background:#444444;border:1px solid #363636;border-radius:3px;box-shadow:inset 0 1px 0 #525252;"></div>
<span style="left:1414.70px;top:170.31px;font-size:10.5px;line-height:10.5px;color:#d6d6d6;letter-spacing:-0.834px;white-space:pre;">50,0%</span>
<svg style="left:1490.00px;top:173.00px;" width="7.40" height="4.60" viewBox="0 0 7.4 4.6"><path d="M0.4 0.6H7L3.7 4.2Z" fill="#b4b4b4"/></svg>
<div style="left:1506.00px;top:173.40px;width:120.00px;height:3.40px;background:#363636;border-radius:1.7px;"></div>
<div style="left:1506.00px;top:173.40px;width:28.00px;height:3.40px;background:#658ab6;border-radius:1.7px;"></div>
<div style="left:1533.00px;top:170.60px;width:9.40px;height:9.80px;background:#5a5a5a;border:1px solid #777;border-radius:2px;"></div>
<svg style="left:1631.00px;top:170.00px;" width="14.00" height="12.00" viewBox="0 0 14 12"><rect x="0.8" y="0.8" width="12.4" height="7.8" rx="0.8" fill="none" stroke="#dcdcdc" stroke-width="1.2"/><rect x="6.2" y="3.6" width="1.6" height="1.8" fill="#dcdcdc"/><path d="M7 8.6V10.6M3.6 11H10.4" stroke="#dcdcdc" stroke-width="1.1"/></svg>
<svg style="left:1411.80px;top:187.80px;" width="17.00" height="17.00" viewBox="0 0 17 17"><circle cx="8.5" cy="8.5" r="8.3" fill="#303030"/><path d="M7 8.5H15.6" stroke="#e8e8e8" stroke-width="1.1"/><circle cx="7" cy="8.5" r="0.9" fill="#e8e8e8"/><path d="M8.5 1.5V15.5" stroke="#484848" stroke-width="0.6" stroke-dasharray="1 1"/></svg>
<div style="left:1433.80px;top:187.40px;width:47.00px;height:17.80px;background:#333333;border-radius:3px 0 0 3px;"></div>
<span style="left:1436.90px;top:191.41px;font-size:10.5px;line-height:10.5px;color:#d6d6d6;letter-spacing:-0.767px;white-space:pre;">0,00°</span>
<div style="left:1480.80px;top:187.40px;width:11.20px;height:17.80px;background:#444444;border:1px solid #383838;border-left:none;border-radius:0 3px 3px 0;"></div>
<svg style="left:1482.90px;top:190.21px;" width="7.00" height="4.50" viewBox="0 0 7 4.5"><path d="M0.5 4L3.5 0.6L6.5 4Z" fill="#a0a0a0"/></svg>
<svg style="left:1482.90px;top:197.99px;" width="7.00" height="4.50" viewBox="0 0 7 4.5"><path d="M0.5 0.5L3.5 3.9L6.5 0.5Z" fill="#a0a0a0"/></svg>
<svg style="left:1553.60px;top:189.00px;" width="14.00" height="14.00" viewBox="0 0 14 14"><path d="M5 1.8H1.6V12.2H5M9 1.8H12.4V12.2H9" fill="none" stroke="#dcdcdc" stroke-width="1.4"/><path d="M7 0V14" stroke="#dcdcdc" stroke-width="1.3"/></svg>
<div style="left:1627.90px;top:187.00px;width:19.80px;height:18.40px;background:#464646;border:1px solid #5a5a5a;border-radius:3px;"></div>
<svg style="left:1631.00px;top:189.40px;" width="13.60" height="13.60" viewBox="0 0 13.6 13.6"><path d="M7.8 0.8L12.8 5.8L11.2 6.2L9.2 8.2L8.8 11L2.6 4.8L5.4 4.4L7.4 2.4Z" fill="#dcdcdc"/><path d="M5.6 8L0.8 12.8" stroke="#dcdcdc" stroke-width="1.2" stroke-linecap="round"/></svg>
<div style="left:1523.80px;top:210.00px;width:1.30px;height:1.30px;background:#9a9a9a;"></div>
<div style="left:1526.30px;top:210.00px;width:1.30px;height:1.30px;background:#9a9a9a;"></div>
<div style="left:1528.80px;top:210.00px;width:1.30px;height:1.30px;background:#9a9a9a;"></div>
<div style="left:1531.30px;top:210.00px;width:1.30px;height:1.30px;background:#9a9a9a;"></div>
<div style="left:1533.80px;top:210.00px;width:1.30px;height:1.30px;background:#9a9a9a;"></div>
<div style="left:1536.30px;top:210.00px;width:1.30px;height:1.30px;background:#9a9a9a;"></div>
<div style="left:1457.30px;top:216.00px;width:79.50px;height:18.00px;background:#434343;border:1px solid #565656;border-bottom:none;border-radius:3px 3px 0 0;"></div>
<div style="left:1538.20px;top:216.00px;width:78.00px;height:18.00px;background:#434343;border:1px solid #565656;border-bottom:none;border-radius:3px 3px 0 0;"></div>
<div style="left:1409.20px;top:214.00px;width:46.60px;height:20.40px;background:#494949;border:1px solid #5c5c5c;border-bottom:none;border-radius:3px 3px 0 0;"></div>
<div style="left:1455.80px;top:233.60px;width:194.00px;height:1.00px;background:#565656;"></div>
<span style="left:1418.80px;top:219.41px;font-size:10.5px;line-height:10.5px;color:#d6d6d6;letter-spacing:-0.803px;white-space:pre;">Layers</span>
<span style="left:1466.50px;top:219.71px;font-size:10.5px;line-height:10.5px;color:#d6d6d6;letter-spacing:-0.259px;white-space:pre;">Compositions</span>
<span style="left:1547.80px;top:219.71px;font-size:10.5px;line-height:10.5px;color:#d6d6d6;letter-spacing:-0.191px;white-space:pre;">Undo History</span>
<svg style="left:1409.60px;top:234.20px;" width="14.40" height="14.40" viewBox="0 0 20 20"><circle cx="10" cy="10" r="9" fill="none" stroke="#dcdcdc" stroke-width="1.7"/><rect x="5.2" y="9.6" width="9.4" height="4.8" fill="#dcdcdc"/><path d="M7 9.6V8A2.9 2.9 0 0 1 12.6 7.2" fill="none" stroke="#dcdcdc" stroke-width="1.6"/></svg>
<span style="left:1429.30px;top:236.01px;font-size:10.5px;line-height:10.5px;color:#d6d6d6;letter-spacing:-0.919px;white-space:pre;">Layers</span>
<svg style="left:1616.60px;top:235.80px;" width="12.00" height="11.40" viewBox="0 0 12 11.4"><rect x="4.4" y="0.8" width="6.8" height="5.6" fill="none" stroke="#dcdcdc" stroke-width="1.3"/><rect x="0.8" y="4.8" width="6.8" height="5.8" fill="#484848" stroke="#dcdcdc" stroke-width="1.3"/></svg>
<svg style="left:1636.80px;top:236.60px;" width="9.40" height="9.40" viewBox="0 0 10 10"><path d="M0.8 0.8L9.2 9.2M9.2 0.8L0.8 9.2" stroke="#dcdcdc" stroke-width="1.3"/></svg>
<div style="left:1410.20px;top:250.50px;width:209.80px;height:25.60px;background:#444444;border:1px solid #363636;border-radius:3px;box-shadow:inset 0 1px 0 #525252;"></div>
<span style="left:1414.00px;top:258.11px;font-size:10.5px;line-height:10.5px;color:#d6d6d6;letter-spacing:-0.390px;white-space:pre;">Normal</span>
<svg style="left:1607.00px;top:260.40px;" width="7.40" height="4.60" viewBox="0 0 7.4 4.6"><path d="M0.4 0.6H7L3.7 4.2Z" fill="#b4b4b4"/></svg>
<svg style="left:1628.40px;top:255.40px;" width="17.00" height="18.00" viewBox="0 0 17 18"><path d="M1 1H13.4L8.6 7.6V14.6L5.8 13V7.6Z" fill="none" stroke="#dcdcdc" stroke-width="1.3" stroke-linejoin="round"/><path d="M13.2 15H16.6L14.9 17Z" fill="#a8a8a8"/></svg>
<div style="left:1410.20px;top:279.20px;width:198.60px;height:24.20px;background:#333333;border-radius:2px 0 0 2px;"></div>
<div style="left:1410.20px;top:279.20px;width:152.20px;height:24.20px;background:#527290;border-radius:2px 0 0 2px;"></div>
<span style="left:1479.40px;top:286.71px;font-size:10.5px;line-height:10.5px;color:#f0f0f0;letter-spacing:-0.505px;white-space:pre;">Opacity:  77%</span>
<div style="left:1608.80px;top:279.20px;width:11.20px;height:24.20px;background:#444444;border:1px solid #383838;border-left:none;border-radius:0 3px 3px 0;"></div>
<svg style="left:1610.90px;top:283.73px;" width="7.00" height="4.50" viewBox="0 0 7 4.5"><path d="M0.5 4L3.5 0.6L6.5 4Z" fill="#a0a0a0"/></svg>
<svg style="left:1610.90px;top:294.47px;" width="7.00" height="4.50" viewBox="0 0 7 4.5"><path d="M0.5 0.5L3.5 3.9L6.5 0.5Z" fill="#a0a0a0"/></svg>
<svg style="left:1629.60px;top:286.60px;" width="17.00" height="14.00" viewBox="0 0 17 14"><path d="M0.4 1.4H11.4M0.4 5.2H11.4M0.4 9H11.4" stroke="#dcdcdc" stroke-width="1.5"/><path d="M12.8 11.6H16.2L14.5 13.6Z" fill="#a8a8a8"/></svg>
<div style="left:1409.40px;top:305.60px;width:240.60px;height:308.80px;background:#383838;"></div>
<div style="left:1448.00px;top:307.00px;width:200.30px;height:22.20px;background:#527290;"></div>
<svg style="left:1413.00px;top:311.80px;" width="13.60" height="13.20" viewBox="0 0 13.6 13.2"><path d="M0.9 6.6C3 1.6 10.6 1.6 12.7 6.6" fill="none" stroke="#e4e4e4" stroke-width="1.5"/><circle cx="6.8" cy="5.8" r="3" fill="#dcdcdc"/><path d="M1.4 8.4C3.8 12.6 9.8 12.6 12.2 8.4" fill="none" stroke="#e4e4e4" stroke-width="1.3"/></svg>
<div style="left:1432.80px;top:312.40px;width:11.80px;height:11.80px;background:#303030;"></div>
<svg style="left:1474.40px;top:307.60px;" width="10.00" height="9.00" viewBox="0 0 10 9"><path d="M1 1H8.4V5.4L5.6 8.2H3.4" fill="none" stroke="#e0e0e0" stroke-width="1"/><path d="M1 1L5 5.6" stroke="#e0e0e0" stroke-width="1"/></svg>
<span style="left:1486.40px;top:313.01px;font-size:10.5px;line-height:10.5px;color:#f0f0f0;letter-spacing:-0.375px;white-space:pre;">Paint Layer 2</span>
<svg style="left:1601.40px;top:311.80px;" width="11.00" height="12.00" viewBox="0 0 11 12"><rect x="0.6" y="5.4" width="9.8" height="6" fill="#8da3ba"/><path d="M5.2 5.4V3.4A2.6 2.6 0 0 1 10.2 3" fill="none" stroke="#8da3ba" stroke-width="1.3"/></svg>
<svg style="left:1616.80px;top:312.80px;" width="11.40" height="10.40" viewBox="0 0 11.4 10.4"><path d="M10 1C9 5 6.4 9.2 3.8 9.2C2 9.2 0.9 7.6 0.9 5.3C0.9 3 2.1 1.2 4 1.2C6.6 1.2 8.2 5.4 10.4 9.4" fill="none" stroke="#8da3ba" stroke-width="1.35"/></svg>
<svg style="left:1633.40px;top:312.00px;" width="12.40" height="12.40" viewBox="0 0 12.4 12.4"><rect x="0.0" y="0.0" width="4.2" height="4.2" fill="#8da3ba" fill-opacity="0.9"/><rect x="0.0" y="4.1" width="4.2" height="4.2" fill="#6482a2" fill-opacity="0.5"/><rect x="0.0" y="8.2" width="4.2" height="4.2" fill="#8da3ba" fill-opacity="0.9"/><rect x="4.1" y="0.0" width="4.2" height="4.2" fill="#6482a2" fill-opacity="0.5"/><rect x="4.1" y="4.1" width="4.2" height="4.2" fill="#8da3ba" fill-opacity="0.9"/><rect x="4.1" y="8.2" width="4.2" height="4.2" fill="#6482a2" fill-opacity="0.5"/><rect x="8.2" y="0.0" width="4.2" height="4.2" fill="#8da3ba" fill-opacity="0.9"/><rect x="8.2" y="4.1" width="4.2" height="4.2" fill="#6482a2" fill-opacity="0.5"/><rect x="8.2" y="8.2" width="4.2" height="4.2" fill="#8da3ba" fill-opacity="0.9"/></svg>
<svg style="left:1413.00px;top:335.20px;" width="13.60" height="13.20" viewBox="0 0 13.6 13.2"><path d="M1 5.8C3.6 2.6 10 2.6 12.6 5.8M1.4 8.6C4 11.8 9.6 11.8 12.2 8.6" fill="none" stroke="#5c5c5c" stroke-width="0.9"/></svg>
<div style="left:1432.80px;top:335.80px;width:11.80px;height:11.80px;background:#303030;"></div>
<svg style="left:1474.40px;top:331.00px;" width="10.00" height="9.00" viewBox="0 0 10 9"><path d="M1 1H8.4V5.4L5.6 8.2H3.4" fill="none" stroke="#6c6c6c" stroke-width="1"/><path d="M1 1L5 5.6" stroke="#6c6c6c" stroke-width="1"/></svg>
<span style="left:1486.40px;top:336.41px;font-size:10.5px;line-height:10.5px;color:#8e8e8e;letter-spacing:-0.652px;white-space:pre;">Paint Layer 1</span>
<svg style="left:1601.40px;top:335.20px;" width="11.00" height="12.00" viewBox="0 0 11 12"><rect x="0.6" y="5.4" width="9.8" height="6" fill="#666"/><path d="M5.2 5.4V3.4A2.6 2.6 0 0 1 10.2 3" fill="none" stroke="#666" stroke-width="1.3"/></svg>
<svg style="left:1616.80px;top:336.20px;" width="11.40" height="10.40" viewBox="0 0 11.4 10.4"><path d="M10 1C9 5 6.4 9.2 3.8 9.2C2 9.2 0.9 7.6 0.9 5.3C0.9 3 2.1 1.2 4 1.2C6.6 1.2 8.2 5.4 10.4 9.4" fill="none" stroke="#666" stroke-width="1.35"/></svg>
<svg style="left:1633.40px;top:335.40px;" width="12.40" height="12.40" viewBox="0 0 12.4 12.4"><rect x="0.0" y="0.0" width="4.2" height="4.2" fill="#666" fill-opacity="0.9"/><rect x="0.0" y="4.1" width="4.2" height="4.2" fill="#4e4e4e" fill-opacity="0.5"/><rect x="0.0" y="8.2" width="4.2" height="4.2" fill="#666" fill-opacity="0.9"/><rect x="4.1" y="0.0" width="4.2" height="4.2" fill="#4e4e4e" fill-opacity="0.5"/><rect x="4.1" y="4.1" width="4.2" height="4.2" fill="#666" fill-opacity="0.9"/><rect x="4.1" y="8.2" width="4.2" height="4.2" fill="#4e4e4e" fill-opacity="0.5"/><rect x="8.2" y="0.0" width="4.2" height="4.2" fill="#666" fill-opacity="0.9"/><rect x="8.2" y="4.1" width="4.2" height="4.2" fill="#4e4e4e" fill-opacity="0.5"/><rect x="8.2" y="8.2" width="4.2" height="4.2" fill="#666" fill-opacity="0.9"/></svg>
<svg style="left:1413.00px;top:358.50px;" width="13.60" height="13.20" viewBox="0 0 13.6 13.2"><path d="M0.9 6.6C3 1.6 10.6 1.6 12.7 6.6" fill="none" stroke="#e4e4e4" stroke-width="1.5"/><circle cx="6.8" cy="5.8" r="3" fill="#dcdcdc"/><path d="M1.4 8.4C3.8 12.6 9.8 12.6 12.2 8.4" fill="none" stroke="#e4e4e4" stroke-width="1.3"/></svg>
<div style="left:1432.80px;top:359.10px;width:11.80px;height:11.80px;background:#303030;"></div>
<svg style="left:1474.40px;top:354.30px;" width="10.00" height="9.00" viewBox="0 0 10 9"><path d="M1 1H8.4V5.4L5.6 8.2H3.4" fill="none" stroke="#e0e0e0" stroke-width="1"/><path d="M1 1L5 5.6" stroke="#e0e0e0" stroke-width="1"/></svg>
<span style="left:1486.40px;top:359.71px;font-size:10.5px;line-height:10.5px;color:#e4e4e4;letter-spacing:-0.264px;white-space:pre;">Background</span>
<svg style="left:1601.40px;top:358.50px;" width="11.00" height="12.00" viewBox="0 0 11 12"><rect x="0.6" y="5.4" width="9.8" height="6" fill="#e8e8e8"/><path d="M2.6 5.4V3.6A2.9 2.9 0 0 1 8.4 3.6V5.4" fill="none" stroke="#e8e8e8" stroke-width="1.4"/></svg>
<svg style="left:1616.80px;top:359.50px;" width="11.40" height="10.40" viewBox="0 0 11.4 10.4"><path d="M10 1C9 5 6.4 9.2 3.8 9.2C2 9.2 0.9 7.6 0.9 5.3C0.9 3 2.1 1.2 4 1.2C6.6 1.2 8.2 5.4 10.4 9.4" fill="none" stroke="#8a8a8a" stroke-width="1.35"/></svg>
<svg style="left:1633.40px;top:358.70px;" width="12.40" height="12.40" viewBox="0 0 12.4 12.4"><rect x="0.0" y="0.0" width="4.2" height="4.2" fill="#8a8a8a" fill-opacity="0.9"/><rect x="0.0" y="4.1" width="4.2" height="4.2" fill="#4e4e4e" fill-opacity="0.5"/><rect x="0.0" y="8.2" width="4.2" height="4.2" fill="#8a8a8a" fill-opacity="0.9"/><rect x="4.1" y="0.0" width="4.2" height="4.2" fill="#4e4e4e" fill-opacity="0.5"/><rect x="4.1" y="4.1" width="4.2" height="4.2" fill="#8a8a8a" fill-opacity="0.9"/><rect x="4.1" y="8.2" width="4.2" height="4.2" fill="#4e4e4e" fill-opacity="0.5"/><rect x="8.2" y="0.0" width="4.2" height="4.2" fill="#8a8a8a" fill-opacity="0.9"/><rect x="8.2" y="4.1" width="4.2" height="4.2" fill="#4e4e4e" fill-opacity="0.5"/><rect x="8.2" y="8.2" width="4.2" height="4.2" fill="#8a8a8a" fill-opacity="0.9"/></svg>
<svg style="left:1434.40px;top:314.00px;" width="9.00" height="9.00" viewBox="0 0 9 9"><path d="M1 5L3.4 7.8L7.8 1" fill="none" stroke="#dcdcdc" stroke-width="1.2"/></svg>
<div style="left:1450.60px;top:312.20px;width:19.20px;height:11.80px;background:#ffffff;border:1px solid #d0d0d0;border-radius:1px;"></div>
<svg style="left:1451.60px;top:313.20px;" width="17.20" height="9.80" viewBox="0 0 17.2 9.8"><path d="M7 1.6H12.4V5.4H14.4V7H3V5.4H7Z" fill="#5e5ed6"/><path d="M2 7.6H15.4" stroke="#6a5ab8" stroke-width="1.2" stroke-dasharray="2 0.8"/><circle cx="3" cy="4" r="0.6" fill="#6c6cd8"/><circle cx="14.6" cy="3" r="0.6" fill="#6c6cd8"/></svg>
<svg style="left:1451.20px;top:336.00px;opacity:0.8;" width="18.00" height="11.00" viewBox="0 0 18 11"><rect x="0.0" y="0.0" width="3.1" height="2.9" fill="#8a8a8a"/><rect x="0.0" y="2.8" width="3.1" height="2.9" fill="#6e6e6e"/><rect x="0.0" y="5.6" width="3.1" height="2.9" fill="#8a8a8a"/><rect x="0.0" y="8.4" width="3.1" height="2.9" fill="#6e6e6e"/><rect x="3.0" y="0.0" width="3.1" height="2.9" fill="#6e6e6e"/><rect x="3.0" y="2.8" width="3.1" height="2.9" fill="#8a8a8a"/><rect x="3.0" y="5.6" width="3.1" height="2.9" fill="#6e6e6e"/><rect x="3.0" y="8.4" width="3.1" height="2.9" fill="#8a8a8a"/><rect x="6.0" y="0.0" width="3.1" height="2.9" fill="#8a8a8a"/><rect x="6.0" y="2.8" width="3.1" height="2.9" fill="#6e6e6e"/><rect x="6.0" y="5.6" width="3.1" height="2.9" fill="#8a8a8a"/><rect x="6.0" y="8.4" width="3.1" height="2.9" fill="#6e6e6e"/><rect x="9.0" y="0.0" width="3.1" height="2.9" fill="#6e6e6e"/><rect x="9.0" y="2.8" width="3.1" height="2.9" fill="#8a8a8a"/><rect x="9.0" y="5.6" width="3.1" height="2.9" fill="#6e6e6e"/><rect x="9.0" y="8.4" width="3.1" height="2.9" fill="#8a8a8a"/><rect x="12.0" y="0.0" width="3.1" height="2.9" fill="#8a8a8a"/><rect x="12.0" y="2.8" width="3.1" height="2.9" fill="#6e6e6e"/><rect x="12.0" y="5.6" width="3.1" height="2.9" fill="#8a8a8a"/><rect x="12.0" y="8.4" width="3.1" height="2.9" fill="#6e6e6e"/><rect x="15.0" y="0.0" width="3.1" height="2.9" fill="#6e6e6e"/><rect x="15.0" y="2.8" width="3.1" height="2.9" fill="#8a8a8a"/><rect x="15.0" y="5.6" width="3.1" height="2.9" fill="#6e6e6e"/><rect x="15.0" y="8.4" width="3.1" height="2.9" fill="#8a8a8a"/></svg>
<div style="left:1451.20px;top:356.40px;width:18.00px;height:17.40px;background:#ffffff;"></div>
<svg style="left:1414.60px;top:620.40px;" width="15.40" height="15.40" viewBox="0 0 15.4 15.4"><path d="M7.7 0.4V15M0.4 7.7H15" stroke="#dcdcdc" stroke-width="1.6"/></svg>
<svg style="left:1437.00px;top:625.60px;" width="6.40" height="4.20" viewBox="0 0 6.4 4.2"><path d="M0.3 0.5H6.1L3.2 3.8Z" fill="#a0a0a0"/></svg>
<svg style="left:1451.00px;top:619.60px;" width="18.40" height="17.40" viewBox="0 0 18.4 17.4"><rect x="5.4" y="0.8" width="12" height="11.6" fill="none" stroke="#dcdcdc" stroke-width="1.5"/><path d="M2 4.6V16H13.6" fill="none" stroke="#dcdcdc" stroke-width="1.5"/></svg>
<svg style="left:1478.00px;top:622.00px;" width="19.00" height="11.00" viewBox="0 0 19 11"><path d="M1 1.6L9.5 9.4L18 1.6" fill="none" stroke="#dcdcdc" stroke-width="1.6"/></svg>
<svg style="left:1505.60px;top:622.00px;" width="19.00" height="11.00" viewBox="0 0 19 11"><path d="M1 9.4L9.5 1.6L18 9.4" fill="none" stroke="#dcdcdc" stroke-width="1.6"/></svg>
<svg style="left:1533.40px;top:620.60px;" width="19.00" height="15.00" viewBox="0 0 19 15"><path d="M0.4 2.4H18.4M0.4 7.5H18.4M0.4 12.6H18.4" stroke="#dcdcdc" stroke-width="1.4"/><rect x="11" y="0.4" width="2.6" height="4" fill="#dcdcdc"/><rect x="4.6" y="5.5" width="2.6" height="4" fill="#dcdcdc"/><rect x="9" y="10.6" width="2.6" height="4" fill="#dcdcdc"/></svg>
<svg style="left:1557.60px;top:625.60px;" width="6.40" height="4.20" viewBox="0 0 6.4 4.2"><path d="M0.3 0.5H6.1L3.2 3.8Z" fill="#a0a0a0"/></svg>
<svg style="left:1628.80px;top:618.40px;" width="15.40" height="17.80" viewBox="0 0 15.4 17.8"><path d="M2 5H13.4V16.4C13.4 17 13 17.4 12.4 17.4H3C2.4 17.4 2 17 2 16.4Z" fill="#dcdcdc"/><rect x="0.6" y="2.2" width="14.2" height="2" fill="#dcdcdc"/><rect x="5" y="0.4" width="5.4" height="2" fill="#dcdcdc"/></svg>
<div style="left:1523.80px;top:643.00px;width:1.30px;height:1.30px;background:#9a9a9a;"></div>
<div style="left:1526.30px;top:643.00px;width:1.30px;height:1.30px;background:#9a9a9a;"></div>
<div style="left:1528.80px;top:643.00px;width:1.30px;height:1.30px;background:#9a9a9a;"></div>
<div style="left:1531.30px;top:643.00px;width:1.30px;height:1.30px;background:#9a9a9a;"></div>
<div style="left:1533.80px;top:643.00px;width:1.30px;height:1.30px;background:#9a9a9a;"></div>
<div style="left:1536.30px;top:643.00px;width:1.30px;height:1.30px;background:#9a9a9a;"></div>
<svg style="left:1409.20px;top:645.80px;" width="14.40" height="14.40" viewBox="0 0 20 20"><circle cx="10" cy="10" r="9" fill="none" stroke="#dcdcdc" stroke-width="1.7"/><rect x="5.2" y="9.6" width="9.4" height="4.8" fill="#dcdcdc"/><path d="M7 9.6V8A2.9 2.9 0 0 1 12.6 7.2" fill="none" stroke="#dcdcdc" stroke-width="1.6"/></svg>
<span style="left:1429.00px;top:647.71px;font-size:10.5px;line-height:10.5px;color:#d6d6d6;letter-spacing:-0.147px;white-space:pre;">Tool Options</span>
<svg style="left:1616.40px;top:647.40px;" width="12.00" height="11.40" viewBox="0 0 12 11.4"><rect x="4.4" y="0.8" width="6.8" height="5.6" fill="none" stroke="#dcdcdc" stroke-width="1.3"/><rect x="0.8" y="4.8" width="6.8" height="5.8" fill="#484848" stroke="#dcdcdc" stroke-width="1.3"/></svg>
<svg style="left:1636.80px;top:648.40px;" width="9.40" height="9.40" viewBox="0 0 10 10"><path d="M0.8 0.8L9.2 9.2M9.2 0.8L0.8 9.2" stroke="#dcdcdc" stroke-width="1.3"/></svg>
<span style="left:1412.40px;top:672.51px;font-size:10.5px;line-height:10.5px;color:#d6d6d6;letter-spacing:-0.292px;white-space:pre;">Brush Smoothing:</span>
<div style="left:1518.50px;top:668.00px;width:127.40px;height:18.20px;background:#444444;border:1px solid #363636;border-radius:3px;box-shadow:inset 0 1px 0 #525252;"></div>
<span style="left:1523.00px;top:672.51px;font-size:10.5px;line-height:10.5px;color:#d6d6d6;letter-spacing:-0.121px;white-space:pre;">Weighted</span>
<svg style="left:1632.60px;top:676.00px;" width="7.40" height="4.60" viewBox="0 0 7.4 4.6"><path d="M0.4 0.6H7L3.7 4.2Z" fill="#b4b4b4"/></svg>
<span style="left:1412.40px;top:696.11px;font-size:10.5px;line-height:10.5px;color:#d6d6d6;letter-spacing:-0.463px;white-space:pre;">Distance:</span>
<div style="left:1519.20px;top:692.60px;width:116.00px;height:17.00px;background:#333333;border-radius:2px 0 0 2px;"></div>
<div style="left:1519.20px;top:692.60px;width:48.80px;height:17.00px;background:#527290;border-radius:2px 0 0 2px;"></div>
<span style="left:1568.00px;top:696.11px;font-size:10.5px;line-height:10.5px;color:#d6d6d6;letter-spacing:-0.709px;white-space:pre;">81,5</span>
<div style="left:1635.00px;top:692.60px;width:10.80px;height:17.00px;background:#444444;border:1px solid #383838;border-left:none;border-radius:0 3px 3px 0;"></div>
<svg style="left:1636.90px;top:695.19px;" width="7.00" height="4.50" viewBox="0 0 7 4.5"><path d="M0.5 4L3.5 0.6L6.5 4Z" fill="#a0a0a0"/></svg>
<svg style="left:1636.90px;top:702.61px;" width="7.00" height="4.50" viewBox="0 0 7 4.5"><path d="M0.5 0.5L3.5 3.9L6.5 0.5Z" fill="#a0a0a0"/></svg>
<span style="left:1412.40px;top:720.11px;font-size:10.5px;line-height:10.5px;color:#d6d6d6;letter-spacing:-0.306px;white-space:pre;">Stroke Ending:</span>
<div style="left:1519.20px;top:716.70px;width:116.00px;height:16.80px;background:#333333;border-radius:2px 0 0 2px;"></div>
<div style="left:1519.20px;top:716.70px;width:40.60px;height:16.80px;background:#527290;border-radius:2px 0 0 2px;"></div>
<span style="left:1568.00px;top:720.11px;font-size:10.5px;line-height:10.5px;color:#d6d6d6;letter-spacing:-0.709px;white-space:pre;">0,35</span>
<div style="left:1635.00px;top:716.70px;width:10.80px;height:16.80px;background:#444444;border:1px solid #383838;border-left:none;border-radius:0 3px 3px 0;"></div>
<svg style="left:1636.90px;top:719.24px;" width="7.00" height="4.50" viewBox="0 0 7 4.5"><path d="M0.5 4L3.5 0.6L6.5 4Z" fill="#a0a0a0"/></svg>
<svg style="left:1636.90px;top:726.56px;" width="7.00" height="4.50" viewBox="0 0 7 4.5"><path d="M0.5 0.5L3.5 3.9L6.5 0.5Z" fill="#a0a0a0"/></svg>
<span style="left:1412.40px;top:743.11px;font-size:10.5px;line-height:10.5px;color:#d6d6d6;letter-spacing:-0.546px;white-space:pre;">Smooth Pressure:</span>
<div style="left:1519.20px;top:742.00px;width:11.00px;height:11.00px;background:#333333;"></div>
<span style="left:1412.40px;top:765.41px;font-size:10.5px;line-height:10.5px;color:#d6d6d6;letter-spacing:-0.493px;white-space:pre;">Scalable Distance:</span>
<div style="left:1519.20px;top:764.40px;width:11.00px;height:11.20px;background:#333333;"></div>
<svg style="left:1520.40px;top:765.60px;" width="8.60" height="8.80" viewBox="0 0 8.6 8.8"><path d="M1 4.8L3.2 7.6L7.6 0.8" fill="none" stroke="#dcdcdc" stroke-width="1.2"/></svg>
<div style="left:1412.40px;top:784.20px;width:233.40px;height:1.00px;background:#5a5a5a;"></div>
<div style="left:1412.40px;top:792.70px;width:11.60px;height:11.70px;background:#353535;"></div>
<span style="left:1429.00px;top:793.71px;font-size:10.5px;line-height:10.5px;color:#d6d6d6;letter-spacing:-0.377px;white-space:pre;">Snap to Assistants</span>
<svg style="left:1430.70px;top:814.50px;" width="164.00" height="54.00" viewBox="0 0 164 54"><defs><filter id="xs" x="-10%" y="-10%" width="125%" height="135%"><feDropShadow dx="1.6" dy="2" stdDeviation="1.6" flood-color="#000" flood-opacity="0.45"/></filter></defs><g transform="translate(4,4)"><g filter="url(#xs)"><path d="M0 0H15V5H6V20H0Z" fill="#b0475e"/><path d="M6 20H9.4L13.4 30V42L6.6 27H0V20Z" fill="#b0475e"/><path d="M22 0H36.4V31.6H22V26.6H30.6V5H22Z" fill="#3e8eb5"/><path d="M45 0.6H54.4L63.4 12.4L72.4 0.6H81.6L68 16.4L82 32.4H72.6L63.4 20.6L54.2 32.4H44.8L58.8 16.4Z" fill="#b6b6b6"/><path d="M85 0.6H108C112.6 0.6 115.6 3.6 115.6 8.2V24.8C115.6 29.4 112.6 32.4 108 32.4H85ZM92.2 6.8V26.2H105.8C107.4 26.2 108.4 25.2 108.4 23.6V9.4C108.4 7.8 107.4 6.8 105.8 6.8Z" fill="#b6b6b6" fill-rule="evenodd"/><path d="M119.2 32.4V8.2C119.2 3.6 122.2 0.6 126.8 0.6H144.4C149 0.6 152 3.6 152 8.2V32.4H144.8V22.4H126.4V32.4ZM126.4 16.4H144.8V9.4C144.8 7.8 143.8 6.8 142.2 6.8H129C127.4 6.8 126.4 7.8 126.4 9.4Z" fill="#b6b6b6" fill-rule="evenodd"/></g></g></svg>
</div></body></html>
